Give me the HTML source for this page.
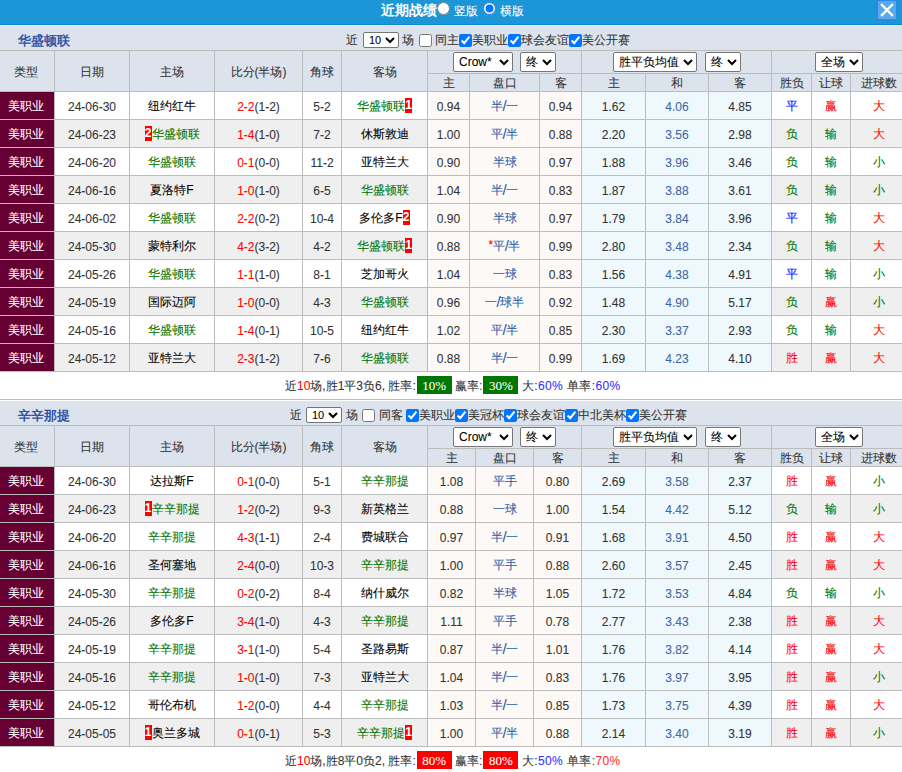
<!DOCTYPE html>
<html><head><meta charset="utf-8"><style>
html,body{margin:0;padding:0;width:902px;height:772px;overflow:hidden;background:#fff}
body{position:relative;font-family:"Liberation Sans",sans-serif;font-size:12px;color:#333;-webkit-text-stroke:0.08px}
div,span,select,input{position:absolute;white-space:nowrap;box-sizing:border-box}
input{margin:0;width:13px;height:13px}
select{font-family:"Liberation Sans",sans-serif;margin:0;color:#000;background:#fff;border-radius:2px;border:1px solid #767676}
.s1{height:16px;font-size:11px;padding:0 0 0 1px}
.s2{height:20px;font-size:12px;padding:0 0 0 1px}
div div{position:absolute}
font{position:static}
.sl{font-style:normal;font-size:15px;line-height:0;position:relative;top:1px;margin:0 -0.5px}
.rc{display:inline-block;background:#f00;color:#fff;width:7px;height:15px;line-height:15px;font-size:12px;vertical-align:1px;text-align:center;font-weight:bold;-webkit-text-stroke:0}
.box{display:inline-block;color:#fff;font-weight:normal;height:18px;line-height:19px;width:35px;text-align:center;font-family:"Liberation Serif",serif;font-size:13px;vertical-align:top;position:relative;top:3px;margin-left:1px}
</style></head><body>
<div style="left:0;top:0;width:902px;height:24px;background:#1b96d6"></div>
<div style="left:0;top:24px;width:902px;height:1px;background:#0d8bd0"></div>
<div style="left:0;top:25px;width:902px;height:1px;background:#e4e7ec"></div>
<span style="left:381px;top:2px;color:#fff;font-weight:bold;font-size:14px;line-height:17px;-webkit-text-stroke:0">近期战绩</span>
<input type="radio" style="left:437px;top:2px">
<span style="left:454px;top:4px;color:#fff;font-size:12px;line-height:15px">竖版</span>
<input type="radio" checked style="left:483px;top:2px">
<span style="left:500px;top:4px;color:#fff;font-size:12px;line-height:15px">横版</span>
<div style="left:876px;top:0;width:22px;height:21px;background:#2a8ae2"></div>
<div style="left:878px;top:1px;width:18px;height:18px;background:#5aa8ea"></div>
<svg style="position:absolute;left:878px;top:1px" width="18" height="18" viewBox="0 0 18 18"><path d="M4 4 L14 14 M14 4 L4 14" stroke="#fff" stroke-width="2.4" stroke-linecap="square"/></svg>
<div style="left:0px;top:26px;width:902px;height:24px;background:#dce3ec"></div>
<span style="left:18px;top:33px;font-weight:bold;color:#3256a6;font-size:13px;line-height:15px;-webkit-text-stroke:0">华盛顿联</span>
<div style="left:0px;top:50px;width:902px;height:1px;background:#bcbcbc"></div>
<span style="left:346px;top:32px;line-height:16px;color:#333">近</span>
<select class="s1" style="left:363px;top:32px;width:36px"><option>10</option></select>
<span style="left:402px;top:32px;line-height:16px;color:#333">场</span>
<input type="checkbox" style="left:419px;top:34px">
<span style="left:435px;top:32px;line-height:16px;color:#333">同主</span>
<input type="checkbox" checked style="left:459px;top:34px">
<span style="left:472px;top:32px;line-height:16px;color:#333">美职业</span>
<input type="checkbox" checked style="left:508px;top:34px">
<span style="left:521px;top:32px;line-height:16px;color:#333">球会友谊</span>
<input type="checkbox" checked style="left:569px;top:34px">
<span style="left:582px;top:32px;line-height:16px;color:#333">美公开赛</span>
<div style="left:0px;top:51px;width:902px;height:40px;background:#dce3ec"></div>
<div style="left:0px;top:91px;width:902px;height:1px;background:#bcbcbc"></div>
<div style="left:54px;top:51px;width:1px;height:40px;background:#bcbcbc"></div>
<div style="left:129px;top:51px;width:1px;height:40px;background:#bcbcbc"></div>
<div style="left:214px;top:51px;width:1px;height:40px;background:#bcbcbc"></div>
<div style="left:302px;top:51px;width:1px;height:40px;background:#bcbcbc"></div>
<div style="left:341px;top:51px;width:1px;height:40px;background:#bcbcbc"></div>
<div style="left:427px;top:51px;width:1px;height:40px;background:#bcbcbc"></div>
<div style="left:428px;top:73px;width:474px;height:1px;background:#bcbcbc"></div>
<div style="left:581px;top:51px;width:1px;height:40px;background:#bcbcbc"></div>
<div style="left:771px;top:51px;width:1px;height:40px;background:#bcbcbc"></div>
<div style="left:469px;top:74px;width:1px;height:17px;background:#bcbcbc"></div>
<div style="left:539px;top:74px;width:1px;height:17px;background:#bcbcbc"></div>
<div style="left:645px;top:74px;width:1px;height:17px;background:#bcbcbc"></div>
<div style="left:708px;top:74px;width:1px;height:17px;background:#bcbcbc"></div>
<div style="left:811px;top:74px;width:1px;height:17px;background:#bcbcbc"></div>
<div style="left:850px;top:74px;width:1px;height:17px;background:#bcbcbc"></div>
<div style="left:-1px;top:52px;width:54px;height:40px;text-align:center;line-height:40px;color:#333">类型</div>
<div style="left:55px;top:52px;width:74px;height:40px;text-align:center;line-height:40px;color:#333">日期</div>
<div style="left:130px;top:52px;width:84px;height:40px;text-align:center;line-height:40px;color:#333">主场</div>
<div style="left:215px;top:52px;width:87px;height:40px;text-align:center;line-height:40px;color:#333">比分(半场)</div>
<div style="left:303px;top:52px;width:38px;height:40px;text-align:center;line-height:40px;color:#333">角球</div>
<div style="left:342px;top:52px;width:85px;height:40px;text-align:center;line-height:40px;color:#333">客场</div>
<div style="left:428px;top:75px;width:41px;height:17px;text-align:center;line-height:17px;color:#333">主</div>
<div style="left:470px;top:75px;width:69px;height:17px;text-align:center;line-height:17px;color:#333">盘口</div>
<div style="left:540px;top:75px;width:41px;height:17px;text-align:center;line-height:17px;color:#333">客</div>
<div style="left:582px;top:75px;width:63px;height:17px;text-align:center;line-height:17px;color:#333">主</div>
<div style="left:646px;top:75px;width:62px;height:17px;text-align:center;line-height:17px;color:#333">和</div>
<div style="left:709px;top:75px;width:62px;height:17px;text-align:center;line-height:17px;color:#333">客</div>
<div style="left:772px;top:75px;width:39px;height:17px;text-align:center;line-height:17px;color:#333">胜负</div>
<div style="left:812px;top:75px;width:38px;height:17px;text-align:center;line-height:17px;color:#333">让球</div>
<div style="left:853px;top:75px;width:51px;height:17px;text-align:center;line-height:17px;color:#333">进球数</div>
<select class="s2" style="left:453px;top:52px;width:60px"><option>Crow*</option></select>
<select class="s2" style="left:520px;top:52px;width:36px"><option>终</option></select>
<select class="s2" style="left:613px;top:52px;width:84px"><option>胜平负均值</option></select>
<select class="s2" style="left:705px;top:52px;width:36px"><option>终</option></select>
<select class="s2" style="left:815px;top:52px;width:48px"><option>全场</option></select>
<div style="left:0px;top:92px;width:54px;height:27px;background:#660033"></div>
<div style="left:55px;top:92px;width:74px;height:27px;background:#fff"></div>
<div style="left:130px;top:92px;width:84px;height:27px;background:#fff"></div>
<div style="left:215px;top:92px;width:87px;height:27px;background:#fff"></div>
<div style="left:303px;top:92px;width:38px;height:27px;background:#fff"></div>
<div style="left:342px;top:92px;width:85px;height:27px;background:#fff"></div>
<div style="left:428px;top:92px;width:41px;height:27px;background:#fdf9f6"></div>
<div style="left:470px;top:92px;width:69px;height:27px;background:#fdf9f6"></div>
<div style="left:540px;top:92px;width:41px;height:27px;background:#fdf9f6"></div>
<div style="left:582px;top:92px;width:63px;height:27px;background:#eff8fc"></div>
<div style="left:646px;top:92px;width:62px;height:27px;background:#eff8fc"></div>
<div style="left:709px;top:92px;width:62px;height:27px;background:#eff8fc"></div>
<div style="left:772px;top:92px;width:39px;height:27px;background:#fff"></div>
<div style="left:812px;top:92px;width:38px;height:27px;background:#fff"></div>
<div style="left:851px;top:92px;width:51px;height:27px;background:#fff"></div>
<div style="left:54px;top:92px;width:1px;height:27px;background:#bcbcbc"></div>
<div style="left:129px;top:92px;width:1px;height:27px;background:#bcbcbc"></div>
<div style="left:214px;top:92px;width:1px;height:27px;background:#bcbcbc"></div>
<div style="left:302px;top:92px;width:1px;height:27px;background:#bcbcbc"></div>
<div style="left:341px;top:92px;width:1px;height:27px;background:#bcbcbc"></div>
<div style="left:427px;top:92px;width:1px;height:27px;background:#bcbcbc"></div>
<div style="left:469px;top:92px;width:1px;height:27px;background:#bcbcbc"></div>
<div style="left:539px;top:92px;width:1px;height:27px;background:#bcbcbc"></div>
<div style="left:581px;top:92px;width:1px;height:27px;background:#bcbcbc"></div>
<div style="left:645px;top:92px;width:1px;height:27px;background:#bcbcbc"></div>
<div style="left:708px;top:92px;width:1px;height:27px;background:#bcbcbc"></div>
<div style="left:771px;top:92px;width:1px;height:27px;background:#bcbcbc"></div>
<div style="left:811px;top:92px;width:1px;height:27px;background:#bcbcbc"></div>
<div style="left:850px;top:92px;width:1px;height:27px;background:#bcbcbc"></div>
<div style="left:0px;top:119px;width:902px;height:1px;background:#bcbcbc"></div>
<div style="left:-1px;top:93px;width:54px;height:27px;text-align:center;line-height:27px;color:#fff">美职业</div>
<div style="left:55px;top:94px;width:74px;height:27px;text-align:center;line-height:27px;color:#333">24-06-30</div>
<div style="left:130px;top:93px;width:84px;height:27px;text-align:center;line-height:27px;"><font style="color:#000">纽约红牛</font></div>
<div style="left:215px;top:94px;width:87px;height:27px;text-align:center;line-height:27px;color:#333"><font style="color:#f00">2-2</font>(1-2)</div>
<div style="left:303px;top:94px;width:38px;height:27px;text-align:center;line-height:27px;color:#333">5-2</div>
<div style="left:342px;top:93px;width:85px;height:27px;text-align:center;line-height:27px;"><font style="color:#007400">华盛顿联</font><b class="rc">1</b></div>
<div style="left:428px;top:94px;width:41px;height:27px;text-align:center;line-height:27px;color:#333">0.94</div>
<div style="left:470px;top:93px;width:69px;height:27px;text-align:center;line-height:27px;color:#2d5ea8">半<em class="sl">/</em>一</div>
<div style="left:540px;top:94px;width:41px;height:27px;text-align:center;line-height:27px;color:#333">0.94</div>
<div style="left:582px;top:94px;width:63px;height:27px;text-align:center;line-height:27px;color:#333">1.62</div>
<div style="left:646px;top:94px;width:62px;height:27px;text-align:center;line-height:27px;color:#3d66a3">4.06</div>
<div style="left:709px;top:94px;width:62px;height:27px;text-align:center;line-height:27px;color:#333">4.85</div>
<div style="left:772px;top:93px;width:39px;height:27px;text-align:center;line-height:27px;color:#00f">平</div>
<div style="left:812px;top:93px;width:38px;height:27px;text-align:center;line-height:27px;color:#f00">赢</div>
<div style="left:853px;top:93px;width:51px;height:27px;text-align:center;line-height:27px;color:#f00">大</div>
<div style="left:0px;top:120px;width:54px;height:27px;background:#660033"></div>
<div style="left:55px;top:120px;width:74px;height:27px;background:#efefef"></div>
<div style="left:130px;top:120px;width:84px;height:27px;background:#efefef"></div>
<div style="left:215px;top:120px;width:87px;height:27px;background:#efefef"></div>
<div style="left:303px;top:120px;width:38px;height:27px;background:#efefef"></div>
<div style="left:342px;top:120px;width:85px;height:27px;background:#efefef"></div>
<div style="left:428px;top:120px;width:41px;height:27px;background:#fdf9f6"></div>
<div style="left:470px;top:120px;width:69px;height:27px;background:#fdf9f6"></div>
<div style="left:540px;top:120px;width:41px;height:27px;background:#fdf9f6"></div>
<div style="left:582px;top:120px;width:63px;height:27px;background:#eff8fc"></div>
<div style="left:646px;top:120px;width:62px;height:27px;background:#eff8fc"></div>
<div style="left:709px;top:120px;width:62px;height:27px;background:#eff8fc"></div>
<div style="left:772px;top:120px;width:39px;height:27px;background:#efefef"></div>
<div style="left:812px;top:120px;width:38px;height:27px;background:#efefef"></div>
<div style="left:851px;top:120px;width:51px;height:27px;background:#efefef"></div>
<div style="left:54px;top:120px;width:1px;height:27px;background:#bcbcbc"></div>
<div style="left:129px;top:120px;width:1px;height:27px;background:#bcbcbc"></div>
<div style="left:214px;top:120px;width:1px;height:27px;background:#bcbcbc"></div>
<div style="left:302px;top:120px;width:1px;height:27px;background:#bcbcbc"></div>
<div style="left:341px;top:120px;width:1px;height:27px;background:#bcbcbc"></div>
<div style="left:427px;top:120px;width:1px;height:27px;background:#bcbcbc"></div>
<div style="left:469px;top:120px;width:1px;height:27px;background:#bcbcbc"></div>
<div style="left:539px;top:120px;width:1px;height:27px;background:#bcbcbc"></div>
<div style="left:581px;top:120px;width:1px;height:27px;background:#bcbcbc"></div>
<div style="left:645px;top:120px;width:1px;height:27px;background:#bcbcbc"></div>
<div style="left:708px;top:120px;width:1px;height:27px;background:#bcbcbc"></div>
<div style="left:771px;top:120px;width:1px;height:27px;background:#bcbcbc"></div>
<div style="left:811px;top:120px;width:1px;height:27px;background:#bcbcbc"></div>
<div style="left:850px;top:120px;width:1px;height:27px;background:#bcbcbc"></div>
<div style="left:0px;top:147px;width:902px;height:1px;background:#bcbcbc"></div>
<div style="left:-1px;top:121px;width:54px;height:27px;text-align:center;line-height:27px;color:#fff">美职业</div>
<div style="left:55px;top:122px;width:74px;height:27px;text-align:center;line-height:27px;color:#333">24-06-23</div>
<div style="left:130px;top:121px;width:84px;height:27px;text-align:center;line-height:27px;"><b class="rc">2</b><font style="color:#007400">华盛顿联</font></div>
<div style="left:215px;top:122px;width:87px;height:27px;text-align:center;line-height:27px;color:#333"><font style="color:#f00">1-4</font>(1-0)</div>
<div style="left:303px;top:122px;width:38px;height:27px;text-align:center;line-height:27px;color:#333">7-2</div>
<div style="left:342px;top:121px;width:85px;height:27px;text-align:center;line-height:27px;"><font style="color:#000">休斯敦迪</font></div>
<div style="left:428px;top:122px;width:41px;height:27px;text-align:center;line-height:27px;color:#333">1.00</div>
<div style="left:470px;top:121px;width:69px;height:27px;text-align:center;line-height:27px;color:#2d5ea8">平<em class="sl">/</em>半</div>
<div style="left:540px;top:122px;width:41px;height:27px;text-align:center;line-height:27px;color:#333">0.88</div>
<div style="left:582px;top:122px;width:63px;height:27px;text-align:center;line-height:27px;color:#333">2.20</div>
<div style="left:646px;top:122px;width:62px;height:27px;text-align:center;line-height:27px;color:#3d66a3">3.56</div>
<div style="left:709px;top:122px;width:62px;height:27px;text-align:center;line-height:27px;color:#333">2.98</div>
<div style="left:772px;top:121px;width:39px;height:27px;text-align:center;line-height:27px;color:#007400">负</div>
<div style="left:812px;top:121px;width:38px;height:27px;text-align:center;line-height:27px;color:#007400">输</div>
<div style="left:853px;top:121px;width:51px;height:27px;text-align:center;line-height:27px;color:#f00">大</div>
<div style="left:0px;top:148px;width:54px;height:27px;background:#660033"></div>
<div style="left:55px;top:148px;width:74px;height:27px;background:#fff"></div>
<div style="left:130px;top:148px;width:84px;height:27px;background:#fff"></div>
<div style="left:215px;top:148px;width:87px;height:27px;background:#fff"></div>
<div style="left:303px;top:148px;width:38px;height:27px;background:#fff"></div>
<div style="left:342px;top:148px;width:85px;height:27px;background:#fff"></div>
<div style="left:428px;top:148px;width:41px;height:27px;background:#fdf9f6"></div>
<div style="left:470px;top:148px;width:69px;height:27px;background:#fdf9f6"></div>
<div style="left:540px;top:148px;width:41px;height:27px;background:#fdf9f6"></div>
<div style="left:582px;top:148px;width:63px;height:27px;background:#eff8fc"></div>
<div style="left:646px;top:148px;width:62px;height:27px;background:#eff8fc"></div>
<div style="left:709px;top:148px;width:62px;height:27px;background:#eff8fc"></div>
<div style="left:772px;top:148px;width:39px;height:27px;background:#fff"></div>
<div style="left:812px;top:148px;width:38px;height:27px;background:#fff"></div>
<div style="left:851px;top:148px;width:51px;height:27px;background:#fff"></div>
<div style="left:54px;top:148px;width:1px;height:27px;background:#bcbcbc"></div>
<div style="left:129px;top:148px;width:1px;height:27px;background:#bcbcbc"></div>
<div style="left:214px;top:148px;width:1px;height:27px;background:#bcbcbc"></div>
<div style="left:302px;top:148px;width:1px;height:27px;background:#bcbcbc"></div>
<div style="left:341px;top:148px;width:1px;height:27px;background:#bcbcbc"></div>
<div style="left:427px;top:148px;width:1px;height:27px;background:#bcbcbc"></div>
<div style="left:469px;top:148px;width:1px;height:27px;background:#bcbcbc"></div>
<div style="left:539px;top:148px;width:1px;height:27px;background:#bcbcbc"></div>
<div style="left:581px;top:148px;width:1px;height:27px;background:#bcbcbc"></div>
<div style="left:645px;top:148px;width:1px;height:27px;background:#bcbcbc"></div>
<div style="left:708px;top:148px;width:1px;height:27px;background:#bcbcbc"></div>
<div style="left:771px;top:148px;width:1px;height:27px;background:#bcbcbc"></div>
<div style="left:811px;top:148px;width:1px;height:27px;background:#bcbcbc"></div>
<div style="left:850px;top:148px;width:1px;height:27px;background:#bcbcbc"></div>
<div style="left:0px;top:175px;width:902px;height:1px;background:#bcbcbc"></div>
<div style="left:-1px;top:149px;width:54px;height:27px;text-align:center;line-height:27px;color:#fff">美职业</div>
<div style="left:55px;top:150px;width:74px;height:27px;text-align:center;line-height:27px;color:#333">24-06-20</div>
<div style="left:130px;top:149px;width:84px;height:27px;text-align:center;line-height:27px;"><font style="color:#007400">华盛顿联</font></div>
<div style="left:215px;top:150px;width:87px;height:27px;text-align:center;line-height:27px;color:#333"><font style="color:#f00">0-1</font>(0-0)</div>
<div style="left:303px;top:150px;width:38px;height:27px;text-align:center;line-height:27px;color:#333">11-2</div>
<div style="left:342px;top:149px;width:85px;height:27px;text-align:center;line-height:27px;"><font style="color:#000">亚特兰大</font></div>
<div style="left:428px;top:150px;width:41px;height:27px;text-align:center;line-height:27px;color:#333">0.90</div>
<div style="left:470px;top:149px;width:69px;height:27px;text-align:center;line-height:27px;color:#2d5ea8">半球</div>
<div style="left:540px;top:150px;width:41px;height:27px;text-align:center;line-height:27px;color:#333">0.97</div>
<div style="left:582px;top:150px;width:63px;height:27px;text-align:center;line-height:27px;color:#333">1.88</div>
<div style="left:646px;top:150px;width:62px;height:27px;text-align:center;line-height:27px;color:#3d66a3">3.96</div>
<div style="left:709px;top:150px;width:62px;height:27px;text-align:center;line-height:27px;color:#333">3.46</div>
<div style="left:772px;top:149px;width:39px;height:27px;text-align:center;line-height:27px;color:#007400">负</div>
<div style="left:812px;top:149px;width:38px;height:27px;text-align:center;line-height:27px;color:#007400">输</div>
<div style="left:853px;top:149px;width:51px;height:27px;text-align:center;line-height:27px;color:#007400">小</div>
<div style="left:0px;top:176px;width:54px;height:27px;background:#660033"></div>
<div style="left:55px;top:176px;width:74px;height:27px;background:#efefef"></div>
<div style="left:130px;top:176px;width:84px;height:27px;background:#efefef"></div>
<div style="left:215px;top:176px;width:87px;height:27px;background:#efefef"></div>
<div style="left:303px;top:176px;width:38px;height:27px;background:#efefef"></div>
<div style="left:342px;top:176px;width:85px;height:27px;background:#efefef"></div>
<div style="left:428px;top:176px;width:41px;height:27px;background:#fdf9f6"></div>
<div style="left:470px;top:176px;width:69px;height:27px;background:#fdf9f6"></div>
<div style="left:540px;top:176px;width:41px;height:27px;background:#fdf9f6"></div>
<div style="left:582px;top:176px;width:63px;height:27px;background:#eff8fc"></div>
<div style="left:646px;top:176px;width:62px;height:27px;background:#eff8fc"></div>
<div style="left:709px;top:176px;width:62px;height:27px;background:#eff8fc"></div>
<div style="left:772px;top:176px;width:39px;height:27px;background:#efefef"></div>
<div style="left:812px;top:176px;width:38px;height:27px;background:#efefef"></div>
<div style="left:851px;top:176px;width:51px;height:27px;background:#efefef"></div>
<div style="left:54px;top:176px;width:1px;height:27px;background:#bcbcbc"></div>
<div style="left:129px;top:176px;width:1px;height:27px;background:#bcbcbc"></div>
<div style="left:214px;top:176px;width:1px;height:27px;background:#bcbcbc"></div>
<div style="left:302px;top:176px;width:1px;height:27px;background:#bcbcbc"></div>
<div style="left:341px;top:176px;width:1px;height:27px;background:#bcbcbc"></div>
<div style="left:427px;top:176px;width:1px;height:27px;background:#bcbcbc"></div>
<div style="left:469px;top:176px;width:1px;height:27px;background:#bcbcbc"></div>
<div style="left:539px;top:176px;width:1px;height:27px;background:#bcbcbc"></div>
<div style="left:581px;top:176px;width:1px;height:27px;background:#bcbcbc"></div>
<div style="left:645px;top:176px;width:1px;height:27px;background:#bcbcbc"></div>
<div style="left:708px;top:176px;width:1px;height:27px;background:#bcbcbc"></div>
<div style="left:771px;top:176px;width:1px;height:27px;background:#bcbcbc"></div>
<div style="left:811px;top:176px;width:1px;height:27px;background:#bcbcbc"></div>
<div style="left:850px;top:176px;width:1px;height:27px;background:#bcbcbc"></div>
<div style="left:0px;top:203px;width:902px;height:1px;background:#bcbcbc"></div>
<div style="left:-1px;top:177px;width:54px;height:27px;text-align:center;line-height:27px;color:#fff">美职业</div>
<div style="left:55px;top:178px;width:74px;height:27px;text-align:center;line-height:27px;color:#333">24-06-16</div>
<div style="left:130px;top:177px;width:84px;height:27px;text-align:center;line-height:27px;"><font style="color:#000">夏洛特F</font></div>
<div style="left:215px;top:178px;width:87px;height:27px;text-align:center;line-height:27px;color:#333"><font style="color:#f00">1-0</font>(1-0)</div>
<div style="left:303px;top:178px;width:38px;height:27px;text-align:center;line-height:27px;color:#333">6-5</div>
<div style="left:342px;top:177px;width:85px;height:27px;text-align:center;line-height:27px;"><font style="color:#007400">华盛顿联</font></div>
<div style="left:428px;top:178px;width:41px;height:27px;text-align:center;line-height:27px;color:#333">1.04</div>
<div style="left:470px;top:177px;width:69px;height:27px;text-align:center;line-height:27px;color:#2d5ea8">半<em class="sl">/</em>一</div>
<div style="left:540px;top:178px;width:41px;height:27px;text-align:center;line-height:27px;color:#333">0.83</div>
<div style="left:582px;top:178px;width:63px;height:27px;text-align:center;line-height:27px;color:#333">1.87</div>
<div style="left:646px;top:178px;width:62px;height:27px;text-align:center;line-height:27px;color:#3d66a3">3.88</div>
<div style="left:709px;top:178px;width:62px;height:27px;text-align:center;line-height:27px;color:#333">3.61</div>
<div style="left:772px;top:177px;width:39px;height:27px;text-align:center;line-height:27px;color:#007400">负</div>
<div style="left:812px;top:177px;width:38px;height:27px;text-align:center;line-height:27px;color:#007400">输</div>
<div style="left:853px;top:177px;width:51px;height:27px;text-align:center;line-height:27px;color:#007400">小</div>
<div style="left:0px;top:204px;width:54px;height:27px;background:#660033"></div>
<div style="left:55px;top:204px;width:74px;height:27px;background:#fff"></div>
<div style="left:130px;top:204px;width:84px;height:27px;background:#fff"></div>
<div style="left:215px;top:204px;width:87px;height:27px;background:#fff"></div>
<div style="left:303px;top:204px;width:38px;height:27px;background:#fff"></div>
<div style="left:342px;top:204px;width:85px;height:27px;background:#fff"></div>
<div style="left:428px;top:204px;width:41px;height:27px;background:#fdf9f6"></div>
<div style="left:470px;top:204px;width:69px;height:27px;background:#fdf9f6"></div>
<div style="left:540px;top:204px;width:41px;height:27px;background:#fdf9f6"></div>
<div style="left:582px;top:204px;width:63px;height:27px;background:#eff8fc"></div>
<div style="left:646px;top:204px;width:62px;height:27px;background:#eff8fc"></div>
<div style="left:709px;top:204px;width:62px;height:27px;background:#eff8fc"></div>
<div style="left:772px;top:204px;width:39px;height:27px;background:#fff"></div>
<div style="left:812px;top:204px;width:38px;height:27px;background:#fff"></div>
<div style="left:851px;top:204px;width:51px;height:27px;background:#fff"></div>
<div style="left:54px;top:204px;width:1px;height:27px;background:#bcbcbc"></div>
<div style="left:129px;top:204px;width:1px;height:27px;background:#bcbcbc"></div>
<div style="left:214px;top:204px;width:1px;height:27px;background:#bcbcbc"></div>
<div style="left:302px;top:204px;width:1px;height:27px;background:#bcbcbc"></div>
<div style="left:341px;top:204px;width:1px;height:27px;background:#bcbcbc"></div>
<div style="left:427px;top:204px;width:1px;height:27px;background:#bcbcbc"></div>
<div style="left:469px;top:204px;width:1px;height:27px;background:#bcbcbc"></div>
<div style="left:539px;top:204px;width:1px;height:27px;background:#bcbcbc"></div>
<div style="left:581px;top:204px;width:1px;height:27px;background:#bcbcbc"></div>
<div style="left:645px;top:204px;width:1px;height:27px;background:#bcbcbc"></div>
<div style="left:708px;top:204px;width:1px;height:27px;background:#bcbcbc"></div>
<div style="left:771px;top:204px;width:1px;height:27px;background:#bcbcbc"></div>
<div style="left:811px;top:204px;width:1px;height:27px;background:#bcbcbc"></div>
<div style="left:850px;top:204px;width:1px;height:27px;background:#bcbcbc"></div>
<div style="left:0px;top:231px;width:902px;height:1px;background:#bcbcbc"></div>
<div style="left:-1px;top:205px;width:54px;height:27px;text-align:center;line-height:27px;color:#fff">美职业</div>
<div style="left:55px;top:206px;width:74px;height:27px;text-align:center;line-height:27px;color:#333">24-06-02</div>
<div style="left:130px;top:205px;width:84px;height:27px;text-align:center;line-height:27px;"><font style="color:#007400">华盛顿联</font></div>
<div style="left:215px;top:206px;width:87px;height:27px;text-align:center;line-height:27px;color:#333"><font style="color:#f00">2-2</font>(0-2)</div>
<div style="left:303px;top:206px;width:38px;height:27px;text-align:center;line-height:27px;color:#333">10-4</div>
<div style="left:342px;top:205px;width:85px;height:27px;text-align:center;line-height:27px;"><font style="color:#000">多伦多F</font><b class="rc">2</b></div>
<div style="left:428px;top:206px;width:41px;height:27px;text-align:center;line-height:27px;color:#333">0.90</div>
<div style="left:470px;top:205px;width:69px;height:27px;text-align:center;line-height:27px;color:#2d5ea8">半球</div>
<div style="left:540px;top:206px;width:41px;height:27px;text-align:center;line-height:27px;color:#333">0.97</div>
<div style="left:582px;top:206px;width:63px;height:27px;text-align:center;line-height:27px;color:#333">1.79</div>
<div style="left:646px;top:206px;width:62px;height:27px;text-align:center;line-height:27px;color:#3d66a3">3.84</div>
<div style="left:709px;top:206px;width:62px;height:27px;text-align:center;line-height:27px;color:#333">3.96</div>
<div style="left:772px;top:205px;width:39px;height:27px;text-align:center;line-height:27px;color:#00f">平</div>
<div style="left:812px;top:205px;width:38px;height:27px;text-align:center;line-height:27px;color:#007400">输</div>
<div style="left:853px;top:205px;width:51px;height:27px;text-align:center;line-height:27px;color:#f00">大</div>
<div style="left:0px;top:232px;width:54px;height:27px;background:#660033"></div>
<div style="left:55px;top:232px;width:74px;height:27px;background:#efefef"></div>
<div style="left:130px;top:232px;width:84px;height:27px;background:#efefef"></div>
<div style="left:215px;top:232px;width:87px;height:27px;background:#efefef"></div>
<div style="left:303px;top:232px;width:38px;height:27px;background:#efefef"></div>
<div style="left:342px;top:232px;width:85px;height:27px;background:#efefef"></div>
<div style="left:428px;top:232px;width:41px;height:27px;background:#fdf9f6"></div>
<div style="left:470px;top:232px;width:69px;height:27px;background:#fdf9f6"></div>
<div style="left:540px;top:232px;width:41px;height:27px;background:#fdf9f6"></div>
<div style="left:582px;top:232px;width:63px;height:27px;background:#eff8fc"></div>
<div style="left:646px;top:232px;width:62px;height:27px;background:#eff8fc"></div>
<div style="left:709px;top:232px;width:62px;height:27px;background:#eff8fc"></div>
<div style="left:772px;top:232px;width:39px;height:27px;background:#efefef"></div>
<div style="left:812px;top:232px;width:38px;height:27px;background:#efefef"></div>
<div style="left:851px;top:232px;width:51px;height:27px;background:#efefef"></div>
<div style="left:54px;top:232px;width:1px;height:27px;background:#bcbcbc"></div>
<div style="left:129px;top:232px;width:1px;height:27px;background:#bcbcbc"></div>
<div style="left:214px;top:232px;width:1px;height:27px;background:#bcbcbc"></div>
<div style="left:302px;top:232px;width:1px;height:27px;background:#bcbcbc"></div>
<div style="left:341px;top:232px;width:1px;height:27px;background:#bcbcbc"></div>
<div style="left:427px;top:232px;width:1px;height:27px;background:#bcbcbc"></div>
<div style="left:469px;top:232px;width:1px;height:27px;background:#bcbcbc"></div>
<div style="left:539px;top:232px;width:1px;height:27px;background:#bcbcbc"></div>
<div style="left:581px;top:232px;width:1px;height:27px;background:#bcbcbc"></div>
<div style="left:645px;top:232px;width:1px;height:27px;background:#bcbcbc"></div>
<div style="left:708px;top:232px;width:1px;height:27px;background:#bcbcbc"></div>
<div style="left:771px;top:232px;width:1px;height:27px;background:#bcbcbc"></div>
<div style="left:811px;top:232px;width:1px;height:27px;background:#bcbcbc"></div>
<div style="left:850px;top:232px;width:1px;height:27px;background:#bcbcbc"></div>
<div style="left:0px;top:259px;width:902px;height:1px;background:#bcbcbc"></div>
<div style="left:-1px;top:233px;width:54px;height:27px;text-align:center;line-height:27px;color:#fff">美职业</div>
<div style="left:55px;top:234px;width:74px;height:27px;text-align:center;line-height:27px;color:#333">24-05-30</div>
<div style="left:130px;top:233px;width:84px;height:27px;text-align:center;line-height:27px;"><font style="color:#000">蒙特利尔</font></div>
<div style="left:215px;top:234px;width:87px;height:27px;text-align:center;line-height:27px;color:#333"><font style="color:#f00">4-2</font>(3-2)</div>
<div style="left:303px;top:234px;width:38px;height:27px;text-align:center;line-height:27px;color:#333">4-2</div>
<div style="left:342px;top:233px;width:85px;height:27px;text-align:center;line-height:27px;"><font style="color:#007400">华盛顿联</font><b class="rc">1</b></div>
<div style="left:428px;top:234px;width:41px;height:27px;text-align:center;line-height:27px;color:#333">0.88</div>
<div style="left:470px;top:233px;width:69px;height:27px;text-align:center;line-height:27px;color:#2d5ea8"><i style="color:#f00;font-style:normal;position:relative;top:-1px">*</i>平<em class="sl">/</em>半</div>
<div style="left:540px;top:234px;width:41px;height:27px;text-align:center;line-height:27px;color:#333">0.99</div>
<div style="left:582px;top:234px;width:63px;height:27px;text-align:center;line-height:27px;color:#333">2.80</div>
<div style="left:646px;top:234px;width:62px;height:27px;text-align:center;line-height:27px;color:#3d66a3">3.48</div>
<div style="left:709px;top:234px;width:62px;height:27px;text-align:center;line-height:27px;color:#333">2.34</div>
<div style="left:772px;top:233px;width:39px;height:27px;text-align:center;line-height:27px;color:#007400">负</div>
<div style="left:812px;top:233px;width:38px;height:27px;text-align:center;line-height:27px;color:#007400">输</div>
<div style="left:853px;top:233px;width:51px;height:27px;text-align:center;line-height:27px;color:#f00">大</div>
<div style="left:0px;top:260px;width:54px;height:27px;background:#660033"></div>
<div style="left:55px;top:260px;width:74px;height:27px;background:#fff"></div>
<div style="left:130px;top:260px;width:84px;height:27px;background:#fff"></div>
<div style="left:215px;top:260px;width:87px;height:27px;background:#fff"></div>
<div style="left:303px;top:260px;width:38px;height:27px;background:#fff"></div>
<div style="left:342px;top:260px;width:85px;height:27px;background:#fff"></div>
<div style="left:428px;top:260px;width:41px;height:27px;background:#fdf9f6"></div>
<div style="left:470px;top:260px;width:69px;height:27px;background:#fdf9f6"></div>
<div style="left:540px;top:260px;width:41px;height:27px;background:#fdf9f6"></div>
<div style="left:582px;top:260px;width:63px;height:27px;background:#eff8fc"></div>
<div style="left:646px;top:260px;width:62px;height:27px;background:#eff8fc"></div>
<div style="left:709px;top:260px;width:62px;height:27px;background:#eff8fc"></div>
<div style="left:772px;top:260px;width:39px;height:27px;background:#fff"></div>
<div style="left:812px;top:260px;width:38px;height:27px;background:#fff"></div>
<div style="left:851px;top:260px;width:51px;height:27px;background:#fff"></div>
<div style="left:54px;top:260px;width:1px;height:27px;background:#bcbcbc"></div>
<div style="left:129px;top:260px;width:1px;height:27px;background:#bcbcbc"></div>
<div style="left:214px;top:260px;width:1px;height:27px;background:#bcbcbc"></div>
<div style="left:302px;top:260px;width:1px;height:27px;background:#bcbcbc"></div>
<div style="left:341px;top:260px;width:1px;height:27px;background:#bcbcbc"></div>
<div style="left:427px;top:260px;width:1px;height:27px;background:#bcbcbc"></div>
<div style="left:469px;top:260px;width:1px;height:27px;background:#bcbcbc"></div>
<div style="left:539px;top:260px;width:1px;height:27px;background:#bcbcbc"></div>
<div style="left:581px;top:260px;width:1px;height:27px;background:#bcbcbc"></div>
<div style="left:645px;top:260px;width:1px;height:27px;background:#bcbcbc"></div>
<div style="left:708px;top:260px;width:1px;height:27px;background:#bcbcbc"></div>
<div style="left:771px;top:260px;width:1px;height:27px;background:#bcbcbc"></div>
<div style="left:811px;top:260px;width:1px;height:27px;background:#bcbcbc"></div>
<div style="left:850px;top:260px;width:1px;height:27px;background:#bcbcbc"></div>
<div style="left:0px;top:287px;width:902px;height:1px;background:#bcbcbc"></div>
<div style="left:-1px;top:261px;width:54px;height:27px;text-align:center;line-height:27px;color:#fff">美职业</div>
<div style="left:55px;top:262px;width:74px;height:27px;text-align:center;line-height:27px;color:#333">24-05-26</div>
<div style="left:130px;top:261px;width:84px;height:27px;text-align:center;line-height:27px;"><font style="color:#007400">华盛顿联</font></div>
<div style="left:215px;top:262px;width:87px;height:27px;text-align:center;line-height:27px;color:#333"><font style="color:#f00">1-1</font>(1-0)</div>
<div style="left:303px;top:262px;width:38px;height:27px;text-align:center;line-height:27px;color:#333">8-1</div>
<div style="left:342px;top:261px;width:85px;height:27px;text-align:center;line-height:27px;"><font style="color:#000">芝加哥火</font></div>
<div style="left:428px;top:262px;width:41px;height:27px;text-align:center;line-height:27px;color:#333">1.04</div>
<div style="left:470px;top:261px;width:69px;height:27px;text-align:center;line-height:27px;color:#2d5ea8">一球</div>
<div style="left:540px;top:262px;width:41px;height:27px;text-align:center;line-height:27px;color:#333">0.83</div>
<div style="left:582px;top:262px;width:63px;height:27px;text-align:center;line-height:27px;color:#333">1.56</div>
<div style="left:646px;top:262px;width:62px;height:27px;text-align:center;line-height:27px;color:#3d66a3">4.38</div>
<div style="left:709px;top:262px;width:62px;height:27px;text-align:center;line-height:27px;color:#333">4.91</div>
<div style="left:772px;top:261px;width:39px;height:27px;text-align:center;line-height:27px;color:#00f">平</div>
<div style="left:812px;top:261px;width:38px;height:27px;text-align:center;line-height:27px;color:#007400">输</div>
<div style="left:853px;top:261px;width:51px;height:27px;text-align:center;line-height:27px;color:#007400">小</div>
<div style="left:0px;top:288px;width:54px;height:27px;background:#660033"></div>
<div style="left:55px;top:288px;width:74px;height:27px;background:#efefef"></div>
<div style="left:130px;top:288px;width:84px;height:27px;background:#efefef"></div>
<div style="left:215px;top:288px;width:87px;height:27px;background:#efefef"></div>
<div style="left:303px;top:288px;width:38px;height:27px;background:#efefef"></div>
<div style="left:342px;top:288px;width:85px;height:27px;background:#efefef"></div>
<div style="left:428px;top:288px;width:41px;height:27px;background:#fdf9f6"></div>
<div style="left:470px;top:288px;width:69px;height:27px;background:#fdf9f6"></div>
<div style="left:540px;top:288px;width:41px;height:27px;background:#fdf9f6"></div>
<div style="left:582px;top:288px;width:63px;height:27px;background:#eff8fc"></div>
<div style="left:646px;top:288px;width:62px;height:27px;background:#eff8fc"></div>
<div style="left:709px;top:288px;width:62px;height:27px;background:#eff8fc"></div>
<div style="left:772px;top:288px;width:39px;height:27px;background:#efefef"></div>
<div style="left:812px;top:288px;width:38px;height:27px;background:#efefef"></div>
<div style="left:851px;top:288px;width:51px;height:27px;background:#efefef"></div>
<div style="left:54px;top:288px;width:1px;height:27px;background:#bcbcbc"></div>
<div style="left:129px;top:288px;width:1px;height:27px;background:#bcbcbc"></div>
<div style="left:214px;top:288px;width:1px;height:27px;background:#bcbcbc"></div>
<div style="left:302px;top:288px;width:1px;height:27px;background:#bcbcbc"></div>
<div style="left:341px;top:288px;width:1px;height:27px;background:#bcbcbc"></div>
<div style="left:427px;top:288px;width:1px;height:27px;background:#bcbcbc"></div>
<div style="left:469px;top:288px;width:1px;height:27px;background:#bcbcbc"></div>
<div style="left:539px;top:288px;width:1px;height:27px;background:#bcbcbc"></div>
<div style="left:581px;top:288px;width:1px;height:27px;background:#bcbcbc"></div>
<div style="left:645px;top:288px;width:1px;height:27px;background:#bcbcbc"></div>
<div style="left:708px;top:288px;width:1px;height:27px;background:#bcbcbc"></div>
<div style="left:771px;top:288px;width:1px;height:27px;background:#bcbcbc"></div>
<div style="left:811px;top:288px;width:1px;height:27px;background:#bcbcbc"></div>
<div style="left:850px;top:288px;width:1px;height:27px;background:#bcbcbc"></div>
<div style="left:0px;top:315px;width:902px;height:1px;background:#bcbcbc"></div>
<div style="left:-1px;top:289px;width:54px;height:27px;text-align:center;line-height:27px;color:#fff">美职业</div>
<div style="left:55px;top:290px;width:74px;height:27px;text-align:center;line-height:27px;color:#333">24-05-19</div>
<div style="left:130px;top:289px;width:84px;height:27px;text-align:center;line-height:27px;"><font style="color:#000">国际迈阿</font></div>
<div style="left:215px;top:290px;width:87px;height:27px;text-align:center;line-height:27px;color:#333"><font style="color:#f00">1-0</font>(0-0)</div>
<div style="left:303px;top:290px;width:38px;height:27px;text-align:center;line-height:27px;color:#333">4-3</div>
<div style="left:342px;top:289px;width:85px;height:27px;text-align:center;line-height:27px;"><font style="color:#007400">华盛顿联</font></div>
<div style="left:428px;top:290px;width:41px;height:27px;text-align:center;line-height:27px;color:#333">0.96</div>
<div style="left:470px;top:289px;width:69px;height:27px;text-align:center;line-height:27px;color:#2d5ea8">一<em class="sl">/</em>球半</div>
<div style="left:540px;top:290px;width:41px;height:27px;text-align:center;line-height:27px;color:#333">0.92</div>
<div style="left:582px;top:290px;width:63px;height:27px;text-align:center;line-height:27px;color:#333">1.48</div>
<div style="left:646px;top:290px;width:62px;height:27px;text-align:center;line-height:27px;color:#3d66a3">4.90</div>
<div style="left:709px;top:290px;width:62px;height:27px;text-align:center;line-height:27px;color:#333">5.17</div>
<div style="left:772px;top:289px;width:39px;height:27px;text-align:center;line-height:27px;color:#007400">负</div>
<div style="left:812px;top:289px;width:38px;height:27px;text-align:center;line-height:27px;color:#f00">赢</div>
<div style="left:853px;top:289px;width:51px;height:27px;text-align:center;line-height:27px;color:#007400">小</div>
<div style="left:0px;top:316px;width:54px;height:27px;background:#660033"></div>
<div style="left:55px;top:316px;width:74px;height:27px;background:#fff"></div>
<div style="left:130px;top:316px;width:84px;height:27px;background:#fff"></div>
<div style="left:215px;top:316px;width:87px;height:27px;background:#fff"></div>
<div style="left:303px;top:316px;width:38px;height:27px;background:#fff"></div>
<div style="left:342px;top:316px;width:85px;height:27px;background:#fff"></div>
<div style="left:428px;top:316px;width:41px;height:27px;background:#fdf9f6"></div>
<div style="left:470px;top:316px;width:69px;height:27px;background:#fdf9f6"></div>
<div style="left:540px;top:316px;width:41px;height:27px;background:#fdf9f6"></div>
<div style="left:582px;top:316px;width:63px;height:27px;background:#eff8fc"></div>
<div style="left:646px;top:316px;width:62px;height:27px;background:#eff8fc"></div>
<div style="left:709px;top:316px;width:62px;height:27px;background:#eff8fc"></div>
<div style="left:772px;top:316px;width:39px;height:27px;background:#fff"></div>
<div style="left:812px;top:316px;width:38px;height:27px;background:#fff"></div>
<div style="left:851px;top:316px;width:51px;height:27px;background:#fff"></div>
<div style="left:54px;top:316px;width:1px;height:27px;background:#bcbcbc"></div>
<div style="left:129px;top:316px;width:1px;height:27px;background:#bcbcbc"></div>
<div style="left:214px;top:316px;width:1px;height:27px;background:#bcbcbc"></div>
<div style="left:302px;top:316px;width:1px;height:27px;background:#bcbcbc"></div>
<div style="left:341px;top:316px;width:1px;height:27px;background:#bcbcbc"></div>
<div style="left:427px;top:316px;width:1px;height:27px;background:#bcbcbc"></div>
<div style="left:469px;top:316px;width:1px;height:27px;background:#bcbcbc"></div>
<div style="left:539px;top:316px;width:1px;height:27px;background:#bcbcbc"></div>
<div style="left:581px;top:316px;width:1px;height:27px;background:#bcbcbc"></div>
<div style="left:645px;top:316px;width:1px;height:27px;background:#bcbcbc"></div>
<div style="left:708px;top:316px;width:1px;height:27px;background:#bcbcbc"></div>
<div style="left:771px;top:316px;width:1px;height:27px;background:#bcbcbc"></div>
<div style="left:811px;top:316px;width:1px;height:27px;background:#bcbcbc"></div>
<div style="left:850px;top:316px;width:1px;height:27px;background:#bcbcbc"></div>
<div style="left:0px;top:343px;width:902px;height:1px;background:#bcbcbc"></div>
<div style="left:-1px;top:317px;width:54px;height:27px;text-align:center;line-height:27px;color:#fff">美职业</div>
<div style="left:55px;top:318px;width:74px;height:27px;text-align:center;line-height:27px;color:#333">24-05-16</div>
<div style="left:130px;top:317px;width:84px;height:27px;text-align:center;line-height:27px;"><font style="color:#007400">华盛顿联</font></div>
<div style="left:215px;top:318px;width:87px;height:27px;text-align:center;line-height:27px;color:#333"><font style="color:#f00">1-4</font>(0-1)</div>
<div style="left:303px;top:318px;width:38px;height:27px;text-align:center;line-height:27px;color:#333">10-5</div>
<div style="left:342px;top:317px;width:85px;height:27px;text-align:center;line-height:27px;"><font style="color:#000">纽约红牛</font></div>
<div style="left:428px;top:318px;width:41px;height:27px;text-align:center;line-height:27px;color:#333">1.02</div>
<div style="left:470px;top:317px;width:69px;height:27px;text-align:center;line-height:27px;color:#2d5ea8">平<em class="sl">/</em>半</div>
<div style="left:540px;top:318px;width:41px;height:27px;text-align:center;line-height:27px;color:#333">0.85</div>
<div style="left:582px;top:318px;width:63px;height:27px;text-align:center;line-height:27px;color:#333">2.30</div>
<div style="left:646px;top:318px;width:62px;height:27px;text-align:center;line-height:27px;color:#3d66a3">3.37</div>
<div style="left:709px;top:318px;width:62px;height:27px;text-align:center;line-height:27px;color:#333">2.93</div>
<div style="left:772px;top:317px;width:39px;height:27px;text-align:center;line-height:27px;color:#007400">负</div>
<div style="left:812px;top:317px;width:38px;height:27px;text-align:center;line-height:27px;color:#007400">输</div>
<div style="left:853px;top:317px;width:51px;height:27px;text-align:center;line-height:27px;color:#f00">大</div>
<div style="left:0px;top:344px;width:54px;height:27px;background:#660033"></div>
<div style="left:55px;top:344px;width:74px;height:27px;background:#efefef"></div>
<div style="left:130px;top:344px;width:84px;height:27px;background:#efefef"></div>
<div style="left:215px;top:344px;width:87px;height:27px;background:#efefef"></div>
<div style="left:303px;top:344px;width:38px;height:27px;background:#efefef"></div>
<div style="left:342px;top:344px;width:85px;height:27px;background:#efefef"></div>
<div style="left:428px;top:344px;width:41px;height:27px;background:#fdf9f6"></div>
<div style="left:470px;top:344px;width:69px;height:27px;background:#fdf9f6"></div>
<div style="left:540px;top:344px;width:41px;height:27px;background:#fdf9f6"></div>
<div style="left:582px;top:344px;width:63px;height:27px;background:#eff8fc"></div>
<div style="left:646px;top:344px;width:62px;height:27px;background:#eff8fc"></div>
<div style="left:709px;top:344px;width:62px;height:27px;background:#eff8fc"></div>
<div style="left:772px;top:344px;width:39px;height:27px;background:#efefef"></div>
<div style="left:812px;top:344px;width:38px;height:27px;background:#efefef"></div>
<div style="left:851px;top:344px;width:51px;height:27px;background:#efefef"></div>
<div style="left:54px;top:344px;width:1px;height:27px;background:#bcbcbc"></div>
<div style="left:129px;top:344px;width:1px;height:27px;background:#bcbcbc"></div>
<div style="left:214px;top:344px;width:1px;height:27px;background:#bcbcbc"></div>
<div style="left:302px;top:344px;width:1px;height:27px;background:#bcbcbc"></div>
<div style="left:341px;top:344px;width:1px;height:27px;background:#bcbcbc"></div>
<div style="left:427px;top:344px;width:1px;height:27px;background:#bcbcbc"></div>
<div style="left:469px;top:344px;width:1px;height:27px;background:#bcbcbc"></div>
<div style="left:539px;top:344px;width:1px;height:27px;background:#bcbcbc"></div>
<div style="left:581px;top:344px;width:1px;height:27px;background:#bcbcbc"></div>
<div style="left:645px;top:344px;width:1px;height:27px;background:#bcbcbc"></div>
<div style="left:708px;top:344px;width:1px;height:27px;background:#bcbcbc"></div>
<div style="left:771px;top:344px;width:1px;height:27px;background:#bcbcbc"></div>
<div style="left:811px;top:344px;width:1px;height:27px;background:#bcbcbc"></div>
<div style="left:850px;top:344px;width:1px;height:27px;background:#bcbcbc"></div>
<div style="left:0px;top:371px;width:902px;height:1px;background:#bcbcbc"></div>
<div style="left:-1px;top:345px;width:54px;height:27px;text-align:center;line-height:27px;color:#fff">美职业</div>
<div style="left:55px;top:346px;width:74px;height:27px;text-align:center;line-height:27px;color:#333">24-05-12</div>
<div style="left:130px;top:345px;width:84px;height:27px;text-align:center;line-height:27px;"><font style="color:#000">亚特兰大</font></div>
<div style="left:215px;top:346px;width:87px;height:27px;text-align:center;line-height:27px;color:#333"><font style="color:#f00">2-3</font>(1-2)</div>
<div style="left:303px;top:346px;width:38px;height:27px;text-align:center;line-height:27px;color:#333">7-6</div>
<div style="left:342px;top:345px;width:85px;height:27px;text-align:center;line-height:27px;"><font style="color:#007400">华盛顿联</font></div>
<div style="left:428px;top:346px;width:41px;height:27px;text-align:center;line-height:27px;color:#333">0.88</div>
<div style="left:470px;top:345px;width:69px;height:27px;text-align:center;line-height:27px;color:#2d5ea8">半<em class="sl">/</em>一</div>
<div style="left:540px;top:346px;width:41px;height:27px;text-align:center;line-height:27px;color:#333">0.99</div>
<div style="left:582px;top:346px;width:63px;height:27px;text-align:center;line-height:27px;color:#333">1.69</div>
<div style="left:646px;top:346px;width:62px;height:27px;text-align:center;line-height:27px;color:#3d66a3">4.23</div>
<div style="left:709px;top:346px;width:62px;height:27px;text-align:center;line-height:27px;color:#333">4.10</div>
<div style="left:772px;top:345px;width:39px;height:27px;text-align:center;line-height:27px;color:#f00">胜</div>
<div style="left:812px;top:345px;width:38px;height:27px;text-align:center;line-height:27px;color:#f00">赢</div>
<div style="left:853px;top:345px;width:51px;height:27px;text-align:center;line-height:27px;color:#f00">大</div>
<div style="left:0px;top:372px;width:902px;height:27px;background:#fff"></div>
<div style="left:285px;top:373px;width:600px;height:27px;line-height:27px;color:#333">近<font style="color:#f00">10</font>场,胜1平3负6, 胜率:<b class="box" style="background:#007700">10%</b> 赢率:<b class="box" style="background:#007700">30%</b> <font style="letter-spacing:0.4px">大:<font style="color:#3333ff">60%</font> 单率:<font style="color:#3333ff">60%</font></font></div>
<div style="left:0px;top:399px;width:902px;height:1px;background:#bcbcbc"></div>
<div style="left:0px;top:401px;width:902px;height:24px;background:#dce3ec"></div>
<span style="left:18px;top:408px;font-weight:bold;color:#3256a6;font-size:13px;line-height:15px;-webkit-text-stroke:0">辛辛那提</span>
<div style="left:0px;top:425px;width:902px;height:1px;background:#bcbcbc"></div>
<span style="left:290px;top:407px;line-height:16px;color:#333">近</span>
<select class="s1" style="left:306px;top:407px;width:36px"><option>10</option></select>
<span style="left:346px;top:407px;line-height:16px;color:#333">场</span>
<input type="checkbox" style="left:362px;top:409px">
<span style="left:379px;top:407px;line-height:16px;color:#333">同客</span>
<input type="checkbox" checked style="left:406px;top:409px">
<span style="left:419px;top:407px;line-height:16px;color:#333">美职业</span>
<input type="checkbox" checked style="left:455px;top:409px">
<span style="left:468px;top:407px;line-height:16px;color:#333">美冠杯</span>
<input type="checkbox" checked style="left:504px;top:409px">
<span style="left:517px;top:407px;line-height:16px;color:#333">球会友谊</span>
<input type="checkbox" checked style="left:565px;top:409px">
<span style="left:578px;top:407px;line-height:16px;color:#333">中北美杯</span>
<input type="checkbox" checked style="left:626px;top:409px">
<span style="left:639px;top:407px;line-height:16px;color:#333">美公开赛</span>
<div style="left:0px;top:426px;width:902px;height:40px;background:#dce3ec"></div>
<div style="left:0px;top:466px;width:902px;height:1px;background:#bcbcbc"></div>
<div style="left:54px;top:426px;width:1px;height:40px;background:#bcbcbc"></div>
<div style="left:129px;top:426px;width:1px;height:40px;background:#bcbcbc"></div>
<div style="left:214px;top:426px;width:1px;height:40px;background:#bcbcbc"></div>
<div style="left:302px;top:426px;width:1px;height:40px;background:#bcbcbc"></div>
<div style="left:341px;top:426px;width:1px;height:40px;background:#bcbcbc"></div>
<div style="left:427px;top:426px;width:1px;height:40px;background:#bcbcbc"></div>
<div style="left:428px;top:448px;width:474px;height:1px;background:#bcbcbc"></div>
<div style="left:581px;top:426px;width:1px;height:40px;background:#bcbcbc"></div>
<div style="left:771px;top:426px;width:1px;height:40px;background:#bcbcbc"></div>
<div style="left:475px;top:449px;width:1px;height:17px;background:#bcbcbc"></div>
<div style="left:533px;top:449px;width:1px;height:17px;background:#bcbcbc"></div>
<div style="left:645px;top:449px;width:1px;height:17px;background:#bcbcbc"></div>
<div style="left:708px;top:449px;width:1px;height:17px;background:#bcbcbc"></div>
<div style="left:811px;top:449px;width:1px;height:17px;background:#bcbcbc"></div>
<div style="left:850px;top:449px;width:1px;height:17px;background:#bcbcbc"></div>
<div style="left:-1px;top:427px;width:54px;height:40px;text-align:center;line-height:40px;color:#333">类型</div>
<div style="left:55px;top:427px;width:74px;height:40px;text-align:center;line-height:40px;color:#333">日期</div>
<div style="left:130px;top:427px;width:84px;height:40px;text-align:center;line-height:40px;color:#333">主场</div>
<div style="left:215px;top:427px;width:87px;height:40px;text-align:center;line-height:40px;color:#333">比分(半场)</div>
<div style="left:303px;top:427px;width:38px;height:40px;text-align:center;line-height:40px;color:#333">角球</div>
<div style="left:342px;top:427px;width:85px;height:40px;text-align:center;line-height:40px;color:#333">客场</div>
<div style="left:428px;top:450px;width:47px;height:17px;text-align:center;line-height:17px;color:#333">主</div>
<div style="left:476px;top:450px;width:57px;height:17px;text-align:center;line-height:17px;color:#333">盘口</div>
<div style="left:534px;top:450px;width:47px;height:17px;text-align:center;line-height:17px;color:#333">客</div>
<div style="left:582px;top:450px;width:63px;height:17px;text-align:center;line-height:17px;color:#333">主</div>
<div style="left:646px;top:450px;width:62px;height:17px;text-align:center;line-height:17px;color:#333">和</div>
<div style="left:709px;top:450px;width:62px;height:17px;text-align:center;line-height:17px;color:#333">客</div>
<div style="left:772px;top:450px;width:39px;height:17px;text-align:center;line-height:17px;color:#333">胜负</div>
<div style="left:812px;top:450px;width:38px;height:17px;text-align:center;line-height:17px;color:#333">让球</div>
<div style="left:853px;top:450px;width:51px;height:17px;text-align:center;line-height:17px;color:#333">进球数</div>
<select class="s2" style="left:453px;top:427px;width:60px"><option>Crow*</option></select>
<select class="s2" style="left:520px;top:427px;width:36px"><option>终</option></select>
<select class="s2" style="left:613px;top:427px;width:84px"><option>胜平负均值</option></select>
<select class="s2" style="left:705px;top:427px;width:36px"><option>终</option></select>
<select class="s2" style="left:815px;top:427px;width:48px"><option>全场</option></select>
<div style="left:0px;top:467px;width:54px;height:27px;background:#660033"></div>
<div style="left:55px;top:467px;width:74px;height:27px;background:#fff"></div>
<div style="left:130px;top:467px;width:84px;height:27px;background:#fff"></div>
<div style="left:215px;top:467px;width:87px;height:27px;background:#fff"></div>
<div style="left:303px;top:467px;width:38px;height:27px;background:#fff"></div>
<div style="left:342px;top:467px;width:85px;height:27px;background:#fff"></div>
<div style="left:428px;top:467px;width:47px;height:27px;background:#fdf9f6"></div>
<div style="left:476px;top:467px;width:57px;height:27px;background:#fdf9f6"></div>
<div style="left:534px;top:467px;width:47px;height:27px;background:#fdf9f6"></div>
<div style="left:582px;top:467px;width:63px;height:27px;background:#eff8fc"></div>
<div style="left:646px;top:467px;width:62px;height:27px;background:#eff8fc"></div>
<div style="left:709px;top:467px;width:62px;height:27px;background:#eff8fc"></div>
<div style="left:772px;top:467px;width:39px;height:27px;background:#fff"></div>
<div style="left:812px;top:467px;width:38px;height:27px;background:#fff"></div>
<div style="left:851px;top:467px;width:51px;height:27px;background:#fff"></div>
<div style="left:54px;top:467px;width:1px;height:27px;background:#bcbcbc"></div>
<div style="left:129px;top:467px;width:1px;height:27px;background:#bcbcbc"></div>
<div style="left:214px;top:467px;width:1px;height:27px;background:#bcbcbc"></div>
<div style="left:302px;top:467px;width:1px;height:27px;background:#bcbcbc"></div>
<div style="left:341px;top:467px;width:1px;height:27px;background:#bcbcbc"></div>
<div style="left:427px;top:467px;width:1px;height:27px;background:#bcbcbc"></div>
<div style="left:475px;top:467px;width:1px;height:27px;background:#bcbcbc"></div>
<div style="left:533px;top:467px;width:1px;height:27px;background:#bcbcbc"></div>
<div style="left:581px;top:467px;width:1px;height:27px;background:#bcbcbc"></div>
<div style="left:645px;top:467px;width:1px;height:27px;background:#bcbcbc"></div>
<div style="left:708px;top:467px;width:1px;height:27px;background:#bcbcbc"></div>
<div style="left:771px;top:467px;width:1px;height:27px;background:#bcbcbc"></div>
<div style="left:811px;top:467px;width:1px;height:27px;background:#bcbcbc"></div>
<div style="left:850px;top:467px;width:1px;height:27px;background:#bcbcbc"></div>
<div style="left:0px;top:494px;width:902px;height:1px;background:#bcbcbc"></div>
<div style="left:-1px;top:468px;width:54px;height:27px;text-align:center;line-height:27px;color:#fff">美职业</div>
<div style="left:55px;top:469px;width:74px;height:27px;text-align:center;line-height:27px;color:#333">24-06-30</div>
<div style="left:130px;top:468px;width:84px;height:27px;text-align:center;line-height:27px;"><font style="color:#000">达拉斯F</font></div>
<div style="left:215px;top:469px;width:87px;height:27px;text-align:center;line-height:27px;color:#333"><font style="color:#f00">0-1</font>(0-0)</div>
<div style="left:303px;top:469px;width:38px;height:27px;text-align:center;line-height:27px;color:#333">5-1</div>
<div style="left:342px;top:468px;width:85px;height:27px;text-align:center;line-height:27px;"><font style="color:#007400">辛辛那提</font></div>
<div style="left:428px;top:469px;width:47px;height:27px;text-align:center;line-height:27px;color:#333">1.08</div>
<div style="left:476px;top:468px;width:57px;height:27px;text-align:center;line-height:27px;color:#2d5ea8">平手</div>
<div style="left:534px;top:469px;width:47px;height:27px;text-align:center;line-height:27px;color:#333">0.80</div>
<div style="left:582px;top:469px;width:63px;height:27px;text-align:center;line-height:27px;color:#333">2.69</div>
<div style="left:646px;top:469px;width:62px;height:27px;text-align:center;line-height:27px;color:#3d66a3">3.58</div>
<div style="left:709px;top:469px;width:62px;height:27px;text-align:center;line-height:27px;color:#333">2.37</div>
<div style="left:772px;top:468px;width:39px;height:27px;text-align:center;line-height:27px;color:#f00">胜</div>
<div style="left:812px;top:468px;width:38px;height:27px;text-align:center;line-height:27px;color:#f00">赢</div>
<div style="left:853px;top:468px;width:51px;height:27px;text-align:center;line-height:27px;color:#007400">小</div>
<div style="left:0px;top:495px;width:54px;height:27px;background:#660033"></div>
<div style="left:55px;top:495px;width:74px;height:27px;background:#efefef"></div>
<div style="left:130px;top:495px;width:84px;height:27px;background:#efefef"></div>
<div style="left:215px;top:495px;width:87px;height:27px;background:#efefef"></div>
<div style="left:303px;top:495px;width:38px;height:27px;background:#efefef"></div>
<div style="left:342px;top:495px;width:85px;height:27px;background:#efefef"></div>
<div style="left:428px;top:495px;width:47px;height:27px;background:#fdf9f6"></div>
<div style="left:476px;top:495px;width:57px;height:27px;background:#fdf9f6"></div>
<div style="left:534px;top:495px;width:47px;height:27px;background:#fdf9f6"></div>
<div style="left:582px;top:495px;width:63px;height:27px;background:#eff8fc"></div>
<div style="left:646px;top:495px;width:62px;height:27px;background:#eff8fc"></div>
<div style="left:709px;top:495px;width:62px;height:27px;background:#eff8fc"></div>
<div style="left:772px;top:495px;width:39px;height:27px;background:#efefef"></div>
<div style="left:812px;top:495px;width:38px;height:27px;background:#efefef"></div>
<div style="left:851px;top:495px;width:51px;height:27px;background:#efefef"></div>
<div style="left:54px;top:495px;width:1px;height:27px;background:#bcbcbc"></div>
<div style="left:129px;top:495px;width:1px;height:27px;background:#bcbcbc"></div>
<div style="left:214px;top:495px;width:1px;height:27px;background:#bcbcbc"></div>
<div style="left:302px;top:495px;width:1px;height:27px;background:#bcbcbc"></div>
<div style="left:341px;top:495px;width:1px;height:27px;background:#bcbcbc"></div>
<div style="left:427px;top:495px;width:1px;height:27px;background:#bcbcbc"></div>
<div style="left:475px;top:495px;width:1px;height:27px;background:#bcbcbc"></div>
<div style="left:533px;top:495px;width:1px;height:27px;background:#bcbcbc"></div>
<div style="left:581px;top:495px;width:1px;height:27px;background:#bcbcbc"></div>
<div style="left:645px;top:495px;width:1px;height:27px;background:#bcbcbc"></div>
<div style="left:708px;top:495px;width:1px;height:27px;background:#bcbcbc"></div>
<div style="left:771px;top:495px;width:1px;height:27px;background:#bcbcbc"></div>
<div style="left:811px;top:495px;width:1px;height:27px;background:#bcbcbc"></div>
<div style="left:850px;top:495px;width:1px;height:27px;background:#bcbcbc"></div>
<div style="left:0px;top:522px;width:902px;height:1px;background:#bcbcbc"></div>
<div style="left:-1px;top:496px;width:54px;height:27px;text-align:center;line-height:27px;color:#fff">美职业</div>
<div style="left:55px;top:497px;width:74px;height:27px;text-align:center;line-height:27px;color:#333">24-06-23</div>
<div style="left:130px;top:496px;width:84px;height:27px;text-align:center;line-height:27px;"><b class="rc">1</b><font style="color:#007400">辛辛那提</font></div>
<div style="left:215px;top:497px;width:87px;height:27px;text-align:center;line-height:27px;color:#333"><font style="color:#f00">1-2</font>(0-2)</div>
<div style="left:303px;top:497px;width:38px;height:27px;text-align:center;line-height:27px;color:#333">9-3</div>
<div style="left:342px;top:496px;width:85px;height:27px;text-align:center;line-height:27px;"><font style="color:#000">新英格兰</font></div>
<div style="left:428px;top:497px;width:47px;height:27px;text-align:center;line-height:27px;color:#333">0.88</div>
<div style="left:476px;top:496px;width:57px;height:27px;text-align:center;line-height:27px;color:#2d5ea8">一球</div>
<div style="left:534px;top:497px;width:47px;height:27px;text-align:center;line-height:27px;color:#333">1.00</div>
<div style="left:582px;top:497px;width:63px;height:27px;text-align:center;line-height:27px;color:#333">1.54</div>
<div style="left:646px;top:497px;width:62px;height:27px;text-align:center;line-height:27px;color:#3d66a3">4.42</div>
<div style="left:709px;top:497px;width:62px;height:27px;text-align:center;line-height:27px;color:#333">5.12</div>
<div style="left:772px;top:496px;width:39px;height:27px;text-align:center;line-height:27px;color:#007400">负</div>
<div style="left:812px;top:496px;width:38px;height:27px;text-align:center;line-height:27px;color:#007400">输</div>
<div style="left:853px;top:496px;width:51px;height:27px;text-align:center;line-height:27px;color:#007400">小</div>
<div style="left:0px;top:523px;width:54px;height:27px;background:#660033"></div>
<div style="left:55px;top:523px;width:74px;height:27px;background:#fff"></div>
<div style="left:130px;top:523px;width:84px;height:27px;background:#fff"></div>
<div style="left:215px;top:523px;width:87px;height:27px;background:#fff"></div>
<div style="left:303px;top:523px;width:38px;height:27px;background:#fff"></div>
<div style="left:342px;top:523px;width:85px;height:27px;background:#fff"></div>
<div style="left:428px;top:523px;width:47px;height:27px;background:#fdf9f6"></div>
<div style="left:476px;top:523px;width:57px;height:27px;background:#fdf9f6"></div>
<div style="left:534px;top:523px;width:47px;height:27px;background:#fdf9f6"></div>
<div style="left:582px;top:523px;width:63px;height:27px;background:#eff8fc"></div>
<div style="left:646px;top:523px;width:62px;height:27px;background:#eff8fc"></div>
<div style="left:709px;top:523px;width:62px;height:27px;background:#eff8fc"></div>
<div style="left:772px;top:523px;width:39px;height:27px;background:#fff"></div>
<div style="left:812px;top:523px;width:38px;height:27px;background:#fff"></div>
<div style="left:851px;top:523px;width:51px;height:27px;background:#fff"></div>
<div style="left:54px;top:523px;width:1px;height:27px;background:#bcbcbc"></div>
<div style="left:129px;top:523px;width:1px;height:27px;background:#bcbcbc"></div>
<div style="left:214px;top:523px;width:1px;height:27px;background:#bcbcbc"></div>
<div style="left:302px;top:523px;width:1px;height:27px;background:#bcbcbc"></div>
<div style="left:341px;top:523px;width:1px;height:27px;background:#bcbcbc"></div>
<div style="left:427px;top:523px;width:1px;height:27px;background:#bcbcbc"></div>
<div style="left:475px;top:523px;width:1px;height:27px;background:#bcbcbc"></div>
<div style="left:533px;top:523px;width:1px;height:27px;background:#bcbcbc"></div>
<div style="left:581px;top:523px;width:1px;height:27px;background:#bcbcbc"></div>
<div style="left:645px;top:523px;width:1px;height:27px;background:#bcbcbc"></div>
<div style="left:708px;top:523px;width:1px;height:27px;background:#bcbcbc"></div>
<div style="left:771px;top:523px;width:1px;height:27px;background:#bcbcbc"></div>
<div style="left:811px;top:523px;width:1px;height:27px;background:#bcbcbc"></div>
<div style="left:850px;top:523px;width:1px;height:27px;background:#bcbcbc"></div>
<div style="left:0px;top:550px;width:902px;height:1px;background:#bcbcbc"></div>
<div style="left:-1px;top:524px;width:54px;height:27px;text-align:center;line-height:27px;color:#fff">美职业</div>
<div style="left:55px;top:525px;width:74px;height:27px;text-align:center;line-height:27px;color:#333">24-06-20</div>
<div style="left:130px;top:524px;width:84px;height:27px;text-align:center;line-height:27px;"><font style="color:#007400">辛辛那提</font></div>
<div style="left:215px;top:525px;width:87px;height:27px;text-align:center;line-height:27px;color:#333"><font style="color:#f00">4-3</font>(1-1)</div>
<div style="left:303px;top:525px;width:38px;height:27px;text-align:center;line-height:27px;color:#333">2-4</div>
<div style="left:342px;top:524px;width:85px;height:27px;text-align:center;line-height:27px;"><font style="color:#000">费城联合</font></div>
<div style="left:428px;top:525px;width:47px;height:27px;text-align:center;line-height:27px;color:#333">0.97</div>
<div style="left:476px;top:524px;width:57px;height:27px;text-align:center;line-height:27px;color:#2d5ea8">半<em class="sl">/</em>一</div>
<div style="left:534px;top:525px;width:47px;height:27px;text-align:center;line-height:27px;color:#333">0.91</div>
<div style="left:582px;top:525px;width:63px;height:27px;text-align:center;line-height:27px;color:#333">1.68</div>
<div style="left:646px;top:525px;width:62px;height:27px;text-align:center;line-height:27px;color:#3d66a3">3.91</div>
<div style="left:709px;top:525px;width:62px;height:27px;text-align:center;line-height:27px;color:#333">4.50</div>
<div style="left:772px;top:524px;width:39px;height:27px;text-align:center;line-height:27px;color:#f00">胜</div>
<div style="left:812px;top:524px;width:38px;height:27px;text-align:center;line-height:27px;color:#f00">赢</div>
<div style="left:853px;top:524px;width:51px;height:27px;text-align:center;line-height:27px;color:#f00">大</div>
<div style="left:0px;top:551px;width:54px;height:27px;background:#660033"></div>
<div style="left:55px;top:551px;width:74px;height:27px;background:#efefef"></div>
<div style="left:130px;top:551px;width:84px;height:27px;background:#efefef"></div>
<div style="left:215px;top:551px;width:87px;height:27px;background:#efefef"></div>
<div style="left:303px;top:551px;width:38px;height:27px;background:#efefef"></div>
<div style="left:342px;top:551px;width:85px;height:27px;background:#efefef"></div>
<div style="left:428px;top:551px;width:47px;height:27px;background:#fdf9f6"></div>
<div style="left:476px;top:551px;width:57px;height:27px;background:#fdf9f6"></div>
<div style="left:534px;top:551px;width:47px;height:27px;background:#fdf9f6"></div>
<div style="left:582px;top:551px;width:63px;height:27px;background:#eff8fc"></div>
<div style="left:646px;top:551px;width:62px;height:27px;background:#eff8fc"></div>
<div style="left:709px;top:551px;width:62px;height:27px;background:#eff8fc"></div>
<div style="left:772px;top:551px;width:39px;height:27px;background:#efefef"></div>
<div style="left:812px;top:551px;width:38px;height:27px;background:#efefef"></div>
<div style="left:851px;top:551px;width:51px;height:27px;background:#efefef"></div>
<div style="left:54px;top:551px;width:1px;height:27px;background:#bcbcbc"></div>
<div style="left:129px;top:551px;width:1px;height:27px;background:#bcbcbc"></div>
<div style="left:214px;top:551px;width:1px;height:27px;background:#bcbcbc"></div>
<div style="left:302px;top:551px;width:1px;height:27px;background:#bcbcbc"></div>
<div style="left:341px;top:551px;width:1px;height:27px;background:#bcbcbc"></div>
<div style="left:427px;top:551px;width:1px;height:27px;background:#bcbcbc"></div>
<div style="left:475px;top:551px;width:1px;height:27px;background:#bcbcbc"></div>
<div style="left:533px;top:551px;width:1px;height:27px;background:#bcbcbc"></div>
<div style="left:581px;top:551px;width:1px;height:27px;background:#bcbcbc"></div>
<div style="left:645px;top:551px;width:1px;height:27px;background:#bcbcbc"></div>
<div style="left:708px;top:551px;width:1px;height:27px;background:#bcbcbc"></div>
<div style="left:771px;top:551px;width:1px;height:27px;background:#bcbcbc"></div>
<div style="left:811px;top:551px;width:1px;height:27px;background:#bcbcbc"></div>
<div style="left:850px;top:551px;width:1px;height:27px;background:#bcbcbc"></div>
<div style="left:0px;top:578px;width:902px;height:1px;background:#bcbcbc"></div>
<div style="left:-1px;top:552px;width:54px;height:27px;text-align:center;line-height:27px;color:#fff">美职业</div>
<div style="left:55px;top:553px;width:74px;height:27px;text-align:center;line-height:27px;color:#333">24-06-16</div>
<div style="left:130px;top:552px;width:84px;height:27px;text-align:center;line-height:27px;"><font style="color:#000">圣何塞地</font></div>
<div style="left:215px;top:553px;width:87px;height:27px;text-align:center;line-height:27px;color:#333"><font style="color:#f00">2-4</font>(0-0)</div>
<div style="left:303px;top:553px;width:38px;height:27px;text-align:center;line-height:27px;color:#333">10-3</div>
<div style="left:342px;top:552px;width:85px;height:27px;text-align:center;line-height:27px;"><font style="color:#007400">辛辛那提</font></div>
<div style="left:428px;top:553px;width:47px;height:27px;text-align:center;line-height:27px;color:#333">1.00</div>
<div style="left:476px;top:552px;width:57px;height:27px;text-align:center;line-height:27px;color:#2d5ea8">平手</div>
<div style="left:534px;top:553px;width:47px;height:27px;text-align:center;line-height:27px;color:#333">0.88</div>
<div style="left:582px;top:553px;width:63px;height:27px;text-align:center;line-height:27px;color:#333">2.60</div>
<div style="left:646px;top:553px;width:62px;height:27px;text-align:center;line-height:27px;color:#3d66a3">3.57</div>
<div style="left:709px;top:553px;width:62px;height:27px;text-align:center;line-height:27px;color:#333">2.45</div>
<div style="left:772px;top:552px;width:39px;height:27px;text-align:center;line-height:27px;color:#f00">胜</div>
<div style="left:812px;top:552px;width:38px;height:27px;text-align:center;line-height:27px;color:#f00">赢</div>
<div style="left:853px;top:552px;width:51px;height:27px;text-align:center;line-height:27px;color:#f00">大</div>
<div style="left:0px;top:579px;width:54px;height:27px;background:#660033"></div>
<div style="left:55px;top:579px;width:74px;height:27px;background:#fff"></div>
<div style="left:130px;top:579px;width:84px;height:27px;background:#fff"></div>
<div style="left:215px;top:579px;width:87px;height:27px;background:#fff"></div>
<div style="left:303px;top:579px;width:38px;height:27px;background:#fff"></div>
<div style="left:342px;top:579px;width:85px;height:27px;background:#fff"></div>
<div style="left:428px;top:579px;width:47px;height:27px;background:#fdf9f6"></div>
<div style="left:476px;top:579px;width:57px;height:27px;background:#fdf9f6"></div>
<div style="left:534px;top:579px;width:47px;height:27px;background:#fdf9f6"></div>
<div style="left:582px;top:579px;width:63px;height:27px;background:#eff8fc"></div>
<div style="left:646px;top:579px;width:62px;height:27px;background:#eff8fc"></div>
<div style="left:709px;top:579px;width:62px;height:27px;background:#eff8fc"></div>
<div style="left:772px;top:579px;width:39px;height:27px;background:#fff"></div>
<div style="left:812px;top:579px;width:38px;height:27px;background:#fff"></div>
<div style="left:851px;top:579px;width:51px;height:27px;background:#fff"></div>
<div style="left:54px;top:579px;width:1px;height:27px;background:#bcbcbc"></div>
<div style="left:129px;top:579px;width:1px;height:27px;background:#bcbcbc"></div>
<div style="left:214px;top:579px;width:1px;height:27px;background:#bcbcbc"></div>
<div style="left:302px;top:579px;width:1px;height:27px;background:#bcbcbc"></div>
<div style="left:341px;top:579px;width:1px;height:27px;background:#bcbcbc"></div>
<div style="left:427px;top:579px;width:1px;height:27px;background:#bcbcbc"></div>
<div style="left:475px;top:579px;width:1px;height:27px;background:#bcbcbc"></div>
<div style="left:533px;top:579px;width:1px;height:27px;background:#bcbcbc"></div>
<div style="left:581px;top:579px;width:1px;height:27px;background:#bcbcbc"></div>
<div style="left:645px;top:579px;width:1px;height:27px;background:#bcbcbc"></div>
<div style="left:708px;top:579px;width:1px;height:27px;background:#bcbcbc"></div>
<div style="left:771px;top:579px;width:1px;height:27px;background:#bcbcbc"></div>
<div style="left:811px;top:579px;width:1px;height:27px;background:#bcbcbc"></div>
<div style="left:850px;top:579px;width:1px;height:27px;background:#bcbcbc"></div>
<div style="left:0px;top:606px;width:902px;height:1px;background:#bcbcbc"></div>
<div style="left:-1px;top:580px;width:54px;height:27px;text-align:center;line-height:27px;color:#fff">美职业</div>
<div style="left:55px;top:581px;width:74px;height:27px;text-align:center;line-height:27px;color:#333">24-05-30</div>
<div style="left:130px;top:580px;width:84px;height:27px;text-align:center;line-height:27px;"><font style="color:#007400">辛辛那提</font></div>
<div style="left:215px;top:581px;width:87px;height:27px;text-align:center;line-height:27px;color:#333"><font style="color:#f00">0-2</font>(0-2)</div>
<div style="left:303px;top:581px;width:38px;height:27px;text-align:center;line-height:27px;color:#333">8-4</div>
<div style="left:342px;top:580px;width:85px;height:27px;text-align:center;line-height:27px;"><font style="color:#000">纳什威尔</font></div>
<div style="left:428px;top:581px;width:47px;height:27px;text-align:center;line-height:27px;color:#333">0.82</div>
<div style="left:476px;top:580px;width:57px;height:27px;text-align:center;line-height:27px;color:#2d5ea8">半球</div>
<div style="left:534px;top:581px;width:47px;height:27px;text-align:center;line-height:27px;color:#333">1.05</div>
<div style="left:582px;top:581px;width:63px;height:27px;text-align:center;line-height:27px;color:#333">1.72</div>
<div style="left:646px;top:581px;width:62px;height:27px;text-align:center;line-height:27px;color:#3d66a3">3.53</div>
<div style="left:709px;top:581px;width:62px;height:27px;text-align:center;line-height:27px;color:#333">4.84</div>
<div style="left:772px;top:580px;width:39px;height:27px;text-align:center;line-height:27px;color:#007400">负</div>
<div style="left:812px;top:580px;width:38px;height:27px;text-align:center;line-height:27px;color:#007400">输</div>
<div style="left:853px;top:580px;width:51px;height:27px;text-align:center;line-height:27px;color:#007400">小</div>
<div style="left:0px;top:607px;width:54px;height:27px;background:#660033"></div>
<div style="left:55px;top:607px;width:74px;height:27px;background:#efefef"></div>
<div style="left:130px;top:607px;width:84px;height:27px;background:#efefef"></div>
<div style="left:215px;top:607px;width:87px;height:27px;background:#efefef"></div>
<div style="left:303px;top:607px;width:38px;height:27px;background:#efefef"></div>
<div style="left:342px;top:607px;width:85px;height:27px;background:#efefef"></div>
<div style="left:428px;top:607px;width:47px;height:27px;background:#fdf9f6"></div>
<div style="left:476px;top:607px;width:57px;height:27px;background:#fdf9f6"></div>
<div style="left:534px;top:607px;width:47px;height:27px;background:#fdf9f6"></div>
<div style="left:582px;top:607px;width:63px;height:27px;background:#eff8fc"></div>
<div style="left:646px;top:607px;width:62px;height:27px;background:#eff8fc"></div>
<div style="left:709px;top:607px;width:62px;height:27px;background:#eff8fc"></div>
<div style="left:772px;top:607px;width:39px;height:27px;background:#efefef"></div>
<div style="left:812px;top:607px;width:38px;height:27px;background:#efefef"></div>
<div style="left:851px;top:607px;width:51px;height:27px;background:#efefef"></div>
<div style="left:54px;top:607px;width:1px;height:27px;background:#bcbcbc"></div>
<div style="left:129px;top:607px;width:1px;height:27px;background:#bcbcbc"></div>
<div style="left:214px;top:607px;width:1px;height:27px;background:#bcbcbc"></div>
<div style="left:302px;top:607px;width:1px;height:27px;background:#bcbcbc"></div>
<div style="left:341px;top:607px;width:1px;height:27px;background:#bcbcbc"></div>
<div style="left:427px;top:607px;width:1px;height:27px;background:#bcbcbc"></div>
<div style="left:475px;top:607px;width:1px;height:27px;background:#bcbcbc"></div>
<div style="left:533px;top:607px;width:1px;height:27px;background:#bcbcbc"></div>
<div style="left:581px;top:607px;width:1px;height:27px;background:#bcbcbc"></div>
<div style="left:645px;top:607px;width:1px;height:27px;background:#bcbcbc"></div>
<div style="left:708px;top:607px;width:1px;height:27px;background:#bcbcbc"></div>
<div style="left:771px;top:607px;width:1px;height:27px;background:#bcbcbc"></div>
<div style="left:811px;top:607px;width:1px;height:27px;background:#bcbcbc"></div>
<div style="left:850px;top:607px;width:1px;height:27px;background:#bcbcbc"></div>
<div style="left:0px;top:634px;width:902px;height:1px;background:#bcbcbc"></div>
<div style="left:-1px;top:608px;width:54px;height:27px;text-align:center;line-height:27px;color:#fff">美职业</div>
<div style="left:55px;top:609px;width:74px;height:27px;text-align:center;line-height:27px;color:#333">24-05-26</div>
<div style="left:130px;top:608px;width:84px;height:27px;text-align:center;line-height:27px;"><font style="color:#000">多伦多F</font></div>
<div style="left:215px;top:609px;width:87px;height:27px;text-align:center;line-height:27px;color:#333"><font style="color:#f00">3-4</font>(1-0)</div>
<div style="left:303px;top:609px;width:38px;height:27px;text-align:center;line-height:27px;color:#333">4-3</div>
<div style="left:342px;top:608px;width:85px;height:27px;text-align:center;line-height:27px;"><font style="color:#007400">辛辛那提</font></div>
<div style="left:428px;top:609px;width:47px;height:27px;text-align:center;line-height:27px;color:#333">1.11</div>
<div style="left:476px;top:608px;width:57px;height:27px;text-align:center;line-height:27px;color:#2d5ea8">平手</div>
<div style="left:534px;top:609px;width:47px;height:27px;text-align:center;line-height:27px;color:#333">0.78</div>
<div style="left:582px;top:609px;width:63px;height:27px;text-align:center;line-height:27px;color:#333">2.77</div>
<div style="left:646px;top:609px;width:62px;height:27px;text-align:center;line-height:27px;color:#3d66a3">3.43</div>
<div style="left:709px;top:609px;width:62px;height:27px;text-align:center;line-height:27px;color:#333">2.38</div>
<div style="left:772px;top:608px;width:39px;height:27px;text-align:center;line-height:27px;color:#f00">胜</div>
<div style="left:812px;top:608px;width:38px;height:27px;text-align:center;line-height:27px;color:#f00">赢</div>
<div style="left:853px;top:608px;width:51px;height:27px;text-align:center;line-height:27px;color:#f00">大</div>
<div style="left:0px;top:635px;width:54px;height:27px;background:#660033"></div>
<div style="left:55px;top:635px;width:74px;height:27px;background:#fff"></div>
<div style="left:130px;top:635px;width:84px;height:27px;background:#fff"></div>
<div style="left:215px;top:635px;width:87px;height:27px;background:#fff"></div>
<div style="left:303px;top:635px;width:38px;height:27px;background:#fff"></div>
<div style="left:342px;top:635px;width:85px;height:27px;background:#fff"></div>
<div style="left:428px;top:635px;width:47px;height:27px;background:#fdf9f6"></div>
<div style="left:476px;top:635px;width:57px;height:27px;background:#fdf9f6"></div>
<div style="left:534px;top:635px;width:47px;height:27px;background:#fdf9f6"></div>
<div style="left:582px;top:635px;width:63px;height:27px;background:#eff8fc"></div>
<div style="left:646px;top:635px;width:62px;height:27px;background:#eff8fc"></div>
<div style="left:709px;top:635px;width:62px;height:27px;background:#eff8fc"></div>
<div style="left:772px;top:635px;width:39px;height:27px;background:#fff"></div>
<div style="left:812px;top:635px;width:38px;height:27px;background:#fff"></div>
<div style="left:851px;top:635px;width:51px;height:27px;background:#fff"></div>
<div style="left:54px;top:635px;width:1px;height:27px;background:#bcbcbc"></div>
<div style="left:129px;top:635px;width:1px;height:27px;background:#bcbcbc"></div>
<div style="left:214px;top:635px;width:1px;height:27px;background:#bcbcbc"></div>
<div style="left:302px;top:635px;width:1px;height:27px;background:#bcbcbc"></div>
<div style="left:341px;top:635px;width:1px;height:27px;background:#bcbcbc"></div>
<div style="left:427px;top:635px;width:1px;height:27px;background:#bcbcbc"></div>
<div style="left:475px;top:635px;width:1px;height:27px;background:#bcbcbc"></div>
<div style="left:533px;top:635px;width:1px;height:27px;background:#bcbcbc"></div>
<div style="left:581px;top:635px;width:1px;height:27px;background:#bcbcbc"></div>
<div style="left:645px;top:635px;width:1px;height:27px;background:#bcbcbc"></div>
<div style="left:708px;top:635px;width:1px;height:27px;background:#bcbcbc"></div>
<div style="left:771px;top:635px;width:1px;height:27px;background:#bcbcbc"></div>
<div style="left:811px;top:635px;width:1px;height:27px;background:#bcbcbc"></div>
<div style="left:850px;top:635px;width:1px;height:27px;background:#bcbcbc"></div>
<div style="left:0px;top:662px;width:902px;height:1px;background:#bcbcbc"></div>
<div style="left:-1px;top:636px;width:54px;height:27px;text-align:center;line-height:27px;color:#fff">美职业</div>
<div style="left:55px;top:637px;width:74px;height:27px;text-align:center;line-height:27px;color:#333">24-05-19</div>
<div style="left:130px;top:636px;width:84px;height:27px;text-align:center;line-height:27px;"><font style="color:#007400">辛辛那提</font></div>
<div style="left:215px;top:637px;width:87px;height:27px;text-align:center;line-height:27px;color:#333"><font style="color:#f00">3-1</font>(1-0)</div>
<div style="left:303px;top:637px;width:38px;height:27px;text-align:center;line-height:27px;color:#333">5-4</div>
<div style="left:342px;top:636px;width:85px;height:27px;text-align:center;line-height:27px;"><font style="color:#000">圣路易斯</font></div>
<div style="left:428px;top:637px;width:47px;height:27px;text-align:center;line-height:27px;color:#333">0.87</div>
<div style="left:476px;top:636px;width:57px;height:27px;text-align:center;line-height:27px;color:#2d5ea8">半<em class="sl">/</em>一</div>
<div style="left:534px;top:637px;width:47px;height:27px;text-align:center;line-height:27px;color:#333">1.01</div>
<div style="left:582px;top:637px;width:63px;height:27px;text-align:center;line-height:27px;color:#333">1.76</div>
<div style="left:646px;top:637px;width:62px;height:27px;text-align:center;line-height:27px;color:#3d66a3">3.82</div>
<div style="left:709px;top:637px;width:62px;height:27px;text-align:center;line-height:27px;color:#333">4.14</div>
<div style="left:772px;top:636px;width:39px;height:27px;text-align:center;line-height:27px;color:#f00">胜</div>
<div style="left:812px;top:636px;width:38px;height:27px;text-align:center;line-height:27px;color:#f00">赢</div>
<div style="left:853px;top:636px;width:51px;height:27px;text-align:center;line-height:27px;color:#f00">大</div>
<div style="left:0px;top:663px;width:54px;height:27px;background:#660033"></div>
<div style="left:55px;top:663px;width:74px;height:27px;background:#efefef"></div>
<div style="left:130px;top:663px;width:84px;height:27px;background:#efefef"></div>
<div style="left:215px;top:663px;width:87px;height:27px;background:#efefef"></div>
<div style="left:303px;top:663px;width:38px;height:27px;background:#efefef"></div>
<div style="left:342px;top:663px;width:85px;height:27px;background:#efefef"></div>
<div style="left:428px;top:663px;width:47px;height:27px;background:#fdf9f6"></div>
<div style="left:476px;top:663px;width:57px;height:27px;background:#fdf9f6"></div>
<div style="left:534px;top:663px;width:47px;height:27px;background:#fdf9f6"></div>
<div style="left:582px;top:663px;width:63px;height:27px;background:#eff8fc"></div>
<div style="left:646px;top:663px;width:62px;height:27px;background:#eff8fc"></div>
<div style="left:709px;top:663px;width:62px;height:27px;background:#eff8fc"></div>
<div style="left:772px;top:663px;width:39px;height:27px;background:#efefef"></div>
<div style="left:812px;top:663px;width:38px;height:27px;background:#efefef"></div>
<div style="left:851px;top:663px;width:51px;height:27px;background:#efefef"></div>
<div style="left:54px;top:663px;width:1px;height:27px;background:#bcbcbc"></div>
<div style="left:129px;top:663px;width:1px;height:27px;background:#bcbcbc"></div>
<div style="left:214px;top:663px;width:1px;height:27px;background:#bcbcbc"></div>
<div style="left:302px;top:663px;width:1px;height:27px;background:#bcbcbc"></div>
<div style="left:341px;top:663px;width:1px;height:27px;background:#bcbcbc"></div>
<div style="left:427px;top:663px;width:1px;height:27px;background:#bcbcbc"></div>
<div style="left:475px;top:663px;width:1px;height:27px;background:#bcbcbc"></div>
<div style="left:533px;top:663px;width:1px;height:27px;background:#bcbcbc"></div>
<div style="left:581px;top:663px;width:1px;height:27px;background:#bcbcbc"></div>
<div style="left:645px;top:663px;width:1px;height:27px;background:#bcbcbc"></div>
<div style="left:708px;top:663px;width:1px;height:27px;background:#bcbcbc"></div>
<div style="left:771px;top:663px;width:1px;height:27px;background:#bcbcbc"></div>
<div style="left:811px;top:663px;width:1px;height:27px;background:#bcbcbc"></div>
<div style="left:850px;top:663px;width:1px;height:27px;background:#bcbcbc"></div>
<div style="left:0px;top:690px;width:902px;height:1px;background:#bcbcbc"></div>
<div style="left:-1px;top:664px;width:54px;height:27px;text-align:center;line-height:27px;color:#fff">美职业</div>
<div style="left:55px;top:665px;width:74px;height:27px;text-align:center;line-height:27px;color:#333">24-05-16</div>
<div style="left:130px;top:664px;width:84px;height:27px;text-align:center;line-height:27px;"><font style="color:#007400">辛辛那提</font></div>
<div style="left:215px;top:665px;width:87px;height:27px;text-align:center;line-height:27px;color:#333"><font style="color:#f00">1-0</font>(1-0)</div>
<div style="left:303px;top:665px;width:38px;height:27px;text-align:center;line-height:27px;color:#333">7-3</div>
<div style="left:342px;top:664px;width:85px;height:27px;text-align:center;line-height:27px;"><font style="color:#000">亚特兰大</font></div>
<div style="left:428px;top:665px;width:47px;height:27px;text-align:center;line-height:27px;color:#333">1.04</div>
<div style="left:476px;top:664px;width:57px;height:27px;text-align:center;line-height:27px;color:#2d5ea8">半<em class="sl">/</em>一</div>
<div style="left:534px;top:665px;width:47px;height:27px;text-align:center;line-height:27px;color:#333">0.83</div>
<div style="left:582px;top:665px;width:63px;height:27px;text-align:center;line-height:27px;color:#333">1.76</div>
<div style="left:646px;top:665px;width:62px;height:27px;text-align:center;line-height:27px;color:#3d66a3">3.97</div>
<div style="left:709px;top:665px;width:62px;height:27px;text-align:center;line-height:27px;color:#333">3.95</div>
<div style="left:772px;top:664px;width:39px;height:27px;text-align:center;line-height:27px;color:#f00">胜</div>
<div style="left:812px;top:664px;width:38px;height:27px;text-align:center;line-height:27px;color:#f00">赢</div>
<div style="left:853px;top:664px;width:51px;height:27px;text-align:center;line-height:27px;color:#007400">小</div>
<div style="left:0px;top:691px;width:54px;height:27px;background:#660033"></div>
<div style="left:55px;top:691px;width:74px;height:27px;background:#fff"></div>
<div style="left:130px;top:691px;width:84px;height:27px;background:#fff"></div>
<div style="left:215px;top:691px;width:87px;height:27px;background:#fff"></div>
<div style="left:303px;top:691px;width:38px;height:27px;background:#fff"></div>
<div style="left:342px;top:691px;width:85px;height:27px;background:#fff"></div>
<div style="left:428px;top:691px;width:47px;height:27px;background:#fdf9f6"></div>
<div style="left:476px;top:691px;width:57px;height:27px;background:#fdf9f6"></div>
<div style="left:534px;top:691px;width:47px;height:27px;background:#fdf9f6"></div>
<div style="left:582px;top:691px;width:63px;height:27px;background:#eff8fc"></div>
<div style="left:646px;top:691px;width:62px;height:27px;background:#eff8fc"></div>
<div style="left:709px;top:691px;width:62px;height:27px;background:#eff8fc"></div>
<div style="left:772px;top:691px;width:39px;height:27px;background:#fff"></div>
<div style="left:812px;top:691px;width:38px;height:27px;background:#fff"></div>
<div style="left:851px;top:691px;width:51px;height:27px;background:#fff"></div>
<div style="left:54px;top:691px;width:1px;height:27px;background:#bcbcbc"></div>
<div style="left:129px;top:691px;width:1px;height:27px;background:#bcbcbc"></div>
<div style="left:214px;top:691px;width:1px;height:27px;background:#bcbcbc"></div>
<div style="left:302px;top:691px;width:1px;height:27px;background:#bcbcbc"></div>
<div style="left:341px;top:691px;width:1px;height:27px;background:#bcbcbc"></div>
<div style="left:427px;top:691px;width:1px;height:27px;background:#bcbcbc"></div>
<div style="left:475px;top:691px;width:1px;height:27px;background:#bcbcbc"></div>
<div style="left:533px;top:691px;width:1px;height:27px;background:#bcbcbc"></div>
<div style="left:581px;top:691px;width:1px;height:27px;background:#bcbcbc"></div>
<div style="left:645px;top:691px;width:1px;height:27px;background:#bcbcbc"></div>
<div style="left:708px;top:691px;width:1px;height:27px;background:#bcbcbc"></div>
<div style="left:771px;top:691px;width:1px;height:27px;background:#bcbcbc"></div>
<div style="left:811px;top:691px;width:1px;height:27px;background:#bcbcbc"></div>
<div style="left:850px;top:691px;width:1px;height:27px;background:#bcbcbc"></div>
<div style="left:0px;top:718px;width:902px;height:1px;background:#bcbcbc"></div>
<div style="left:-1px;top:692px;width:54px;height:27px;text-align:center;line-height:27px;color:#fff">美职业</div>
<div style="left:55px;top:693px;width:74px;height:27px;text-align:center;line-height:27px;color:#333">24-05-12</div>
<div style="left:130px;top:692px;width:84px;height:27px;text-align:center;line-height:27px;"><font style="color:#000">哥伦布机</font></div>
<div style="left:215px;top:693px;width:87px;height:27px;text-align:center;line-height:27px;color:#333"><font style="color:#f00">1-2</font>(0-0)</div>
<div style="left:303px;top:693px;width:38px;height:27px;text-align:center;line-height:27px;color:#333">4-4</div>
<div style="left:342px;top:692px;width:85px;height:27px;text-align:center;line-height:27px;"><font style="color:#007400">辛辛那提</font></div>
<div style="left:428px;top:693px;width:47px;height:27px;text-align:center;line-height:27px;color:#333">1.03</div>
<div style="left:476px;top:692px;width:57px;height:27px;text-align:center;line-height:27px;color:#2d5ea8">半<em class="sl">/</em>一</div>
<div style="left:534px;top:693px;width:47px;height:27px;text-align:center;line-height:27px;color:#333">0.85</div>
<div style="left:582px;top:693px;width:63px;height:27px;text-align:center;line-height:27px;color:#333">1.73</div>
<div style="left:646px;top:693px;width:62px;height:27px;text-align:center;line-height:27px;color:#3d66a3">3.75</div>
<div style="left:709px;top:693px;width:62px;height:27px;text-align:center;line-height:27px;color:#333">4.39</div>
<div style="left:772px;top:692px;width:39px;height:27px;text-align:center;line-height:27px;color:#f00">胜</div>
<div style="left:812px;top:692px;width:38px;height:27px;text-align:center;line-height:27px;color:#f00">赢</div>
<div style="left:853px;top:692px;width:51px;height:27px;text-align:center;line-height:27px;color:#f00">大</div>
<div style="left:0px;top:719px;width:54px;height:27px;background:#660033"></div>
<div style="left:55px;top:719px;width:74px;height:27px;background:#efefef"></div>
<div style="left:130px;top:719px;width:84px;height:27px;background:#efefef"></div>
<div style="left:215px;top:719px;width:87px;height:27px;background:#efefef"></div>
<div style="left:303px;top:719px;width:38px;height:27px;background:#efefef"></div>
<div style="left:342px;top:719px;width:85px;height:27px;background:#efefef"></div>
<div style="left:428px;top:719px;width:47px;height:27px;background:#fdf9f6"></div>
<div style="left:476px;top:719px;width:57px;height:27px;background:#fdf9f6"></div>
<div style="left:534px;top:719px;width:47px;height:27px;background:#fdf9f6"></div>
<div style="left:582px;top:719px;width:63px;height:27px;background:#eff8fc"></div>
<div style="left:646px;top:719px;width:62px;height:27px;background:#eff8fc"></div>
<div style="left:709px;top:719px;width:62px;height:27px;background:#eff8fc"></div>
<div style="left:772px;top:719px;width:39px;height:27px;background:#efefef"></div>
<div style="left:812px;top:719px;width:38px;height:27px;background:#efefef"></div>
<div style="left:851px;top:719px;width:51px;height:27px;background:#efefef"></div>
<div style="left:54px;top:719px;width:1px;height:27px;background:#bcbcbc"></div>
<div style="left:129px;top:719px;width:1px;height:27px;background:#bcbcbc"></div>
<div style="left:214px;top:719px;width:1px;height:27px;background:#bcbcbc"></div>
<div style="left:302px;top:719px;width:1px;height:27px;background:#bcbcbc"></div>
<div style="left:341px;top:719px;width:1px;height:27px;background:#bcbcbc"></div>
<div style="left:427px;top:719px;width:1px;height:27px;background:#bcbcbc"></div>
<div style="left:475px;top:719px;width:1px;height:27px;background:#bcbcbc"></div>
<div style="left:533px;top:719px;width:1px;height:27px;background:#bcbcbc"></div>
<div style="left:581px;top:719px;width:1px;height:27px;background:#bcbcbc"></div>
<div style="left:645px;top:719px;width:1px;height:27px;background:#bcbcbc"></div>
<div style="left:708px;top:719px;width:1px;height:27px;background:#bcbcbc"></div>
<div style="left:771px;top:719px;width:1px;height:27px;background:#bcbcbc"></div>
<div style="left:811px;top:719px;width:1px;height:27px;background:#bcbcbc"></div>
<div style="left:850px;top:719px;width:1px;height:27px;background:#bcbcbc"></div>
<div style="left:0px;top:746px;width:902px;height:1px;background:#bcbcbc"></div>
<div style="left:-1px;top:720px;width:54px;height:27px;text-align:center;line-height:27px;color:#fff">美职业</div>
<div style="left:55px;top:721px;width:74px;height:27px;text-align:center;line-height:27px;color:#333">24-05-05</div>
<div style="left:130px;top:720px;width:84px;height:27px;text-align:center;line-height:27px;"><b class="rc">1</b><font style="color:#000">奥兰多城</font></div>
<div style="left:215px;top:721px;width:87px;height:27px;text-align:center;line-height:27px;color:#333"><font style="color:#f00">0-1</font>(0-1)</div>
<div style="left:303px;top:721px;width:38px;height:27px;text-align:center;line-height:27px;color:#333">5-3</div>
<div style="left:342px;top:720px;width:85px;height:27px;text-align:center;line-height:27px;"><font style="color:#007400">辛辛那提</font><b class="rc">1</b></div>
<div style="left:428px;top:721px;width:47px;height:27px;text-align:center;line-height:27px;color:#333">1.00</div>
<div style="left:476px;top:720px;width:57px;height:27px;text-align:center;line-height:27px;color:#2d5ea8">平<em class="sl">/</em>半</div>
<div style="left:534px;top:721px;width:47px;height:27px;text-align:center;line-height:27px;color:#333">0.88</div>
<div style="left:582px;top:721px;width:63px;height:27px;text-align:center;line-height:27px;color:#333">2.14</div>
<div style="left:646px;top:721px;width:62px;height:27px;text-align:center;line-height:27px;color:#3d66a3">3.40</div>
<div style="left:709px;top:721px;width:62px;height:27px;text-align:center;line-height:27px;color:#333">3.19</div>
<div style="left:772px;top:720px;width:39px;height:27px;text-align:center;line-height:27px;color:#f00">胜</div>
<div style="left:812px;top:720px;width:38px;height:27px;text-align:center;line-height:27px;color:#f00">赢</div>
<div style="left:853px;top:720px;width:51px;height:27px;text-align:center;line-height:27px;color:#007400">小</div>
<div style="left:0px;top:747px;width:902px;height:27px;background:#fff"></div>
<div style="left:285px;top:748px;width:600px;height:27px;line-height:27px;color:#333">近<font style="color:#f00">10</font>场,胜8平0负2, 胜率:<b class="box" style="background:#ff0000">80%</b> 赢率:<b class="box" style="background:#ff0000">80%</b> <font style="letter-spacing:0.4px">大:<font style="color:#3333ff">50%</font> 单率:<font style="color:#f33">70%</font></font></div>
</body></html>
